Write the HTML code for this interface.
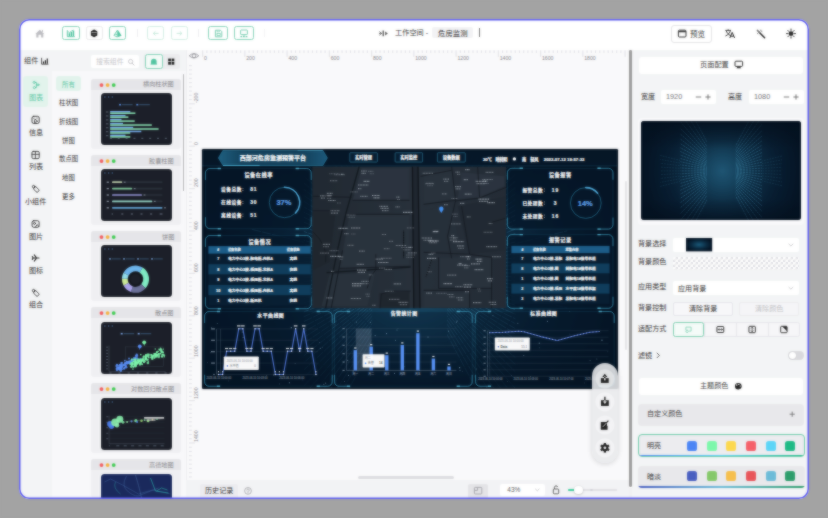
<!DOCTYPE html><html lang="zh"><head><meta charset="utf-8"><title>工作空间 - 危房监测</title><style>
html,body{margin:0;padding:0;}
body{width:828px;height:518px;overflow:hidden;background:#a3a3a3;font-family:"Liberation Sans",sans-serif;}
#win{position:absolute;left:19px;top:19px;width:790px;height:480px;border-radius:10px;background:#fff;overflow:hidden;}
#in{position:absolute;left:-19px;top:-19px;width:828px;height:518px;}
.b{position:absolute;}
.t,.s{position:absolute;overflow:visible;display:block;}
.l{position:absolute;white-space:nowrap;}
svg text{font-family:"Liberation Sans","Noto Sans CJK SC",sans-serif;}
.bw{fill:#fff;stroke:#fff;stroke-width:0.2;stroke-linejoin:round;font-weight:bold;}
#soft{position:absolute;left:0;top:0;width:828px;height:518px;pointer-events:none;-webkit-backdrop-filter:blur(0.8px);backdrop-filter:blur(0.8px);opacity:0.6;}
</style></head><body><div id="win"><div id="in"><div class="b" style="left:20px;top:50px;width:166px;height:448.5px;background:#f3f4f6;"></div><div class="b" style="left:52px;top:71px;width:134px;height:427.5px;background:#f8f8fa;"></div><div class="b" style="left:186px;top:50px;width:442.5px;height:430px;background:#f9f9fb;"></div><div class="b" style="left:186px;top:480px;width:442.5px;height:18.5px;background:#f2f3f5;"></div><div class="b" style="left:628.5px;top:50.2px;width:3.8px;height:437.3px;background:#9b9b9b;border-radius:1.5px 1.5px 2px 2px;"></div><div class="b" style="left:628.5px;top:487.5px;width:3.8px;height:11px;background:#f0f0f2;"></div><div class="b" style="left:632.3px;top:50px;width:175.7px;height:448.5px;background:#f3f4f6;"></div><svg class="s" style="left:35px;top:29px;width:10px;height:9px;" viewBox="35 29 10 9"><path d="M35.4 33.9 L39.8 29.7 L44.2 33.9 L43.3 33.9 V37.6 H41.1 V34.8 H38.5 V37.6 H36.3 V33.9 Z" fill="#bcbcc0"/><path d="M42.4 29.9 v2.2" stroke="#bcbcc0" stroke-width="1"/></svg><div class="b" style="left:62.2px;top:26.2px;width:17.4px;height:14.3px;background:#fff;border-radius:2.5px;border:1px solid #86d3b8;box-sizing:border-box;"></div><svg class="s" style="left:66px;top:29px;width:10px;height:9px;" viewBox="66 29 10 9"><path d="M67.3 30.2 V36.6 H74.8" fill="none" stroke="#52c4a0" stroke-width="0.9"/><path d="M68.6 36 V33.2 H70 V36Z M70.6 36 V32 H72 V36Z M72.6 36 V30.6 H74.2 V36Z" fill="#52c4a0"/><path d="M68 31.6 L69.4 32.6 L71.4 31.2 L73.4 30" fill="none" stroke="#52c4a0" stroke-width="0.7"/></svg><div class="b" style="left:85.5px;top:26.2px;width:17.1px;height:14.3px;background:#fff;border-radius:2.5px;border:1px solid #e9e9eb;box-sizing:border-box;"></div><svg class="s" style="left:90px;top:29px;width:9px;height:9px;" viewBox="90 29 9 9"><path d="M94.1 29.6 L97.3 31.2 V35.6 L94.1 37.2 L90.9 35.6 V31.2 Z" fill="#1f1f1f"/><path d="M91.6 32.6 H96.6" stroke="#fff" stroke-width="0.6"/><path d="M92.6 34.4 H95.6" stroke="#999" stroke-width="0.5"/></svg><div class="b" style="left:108.8px;top:26.2px;width:17.6px;height:14.3px;background:#fff;border-radius:2.5px;border:1px solid #86d3b8;box-sizing:border-box;"></div><svg class="s" style="left:113px;top:29px;width:10px;height:9px;" viewBox="113 29 10 9"><path d="M117.8 29.8 L121.6 35.8 L117.6 37.2 Z" fill="#52c4a0"/><path d="M117.4 30.2 L113.9 35.4 L117.2 37 Z" fill="none" stroke="#52c4a0" stroke-width="0.8" stroke-linejoin="round"/><circle cx="116" cy="34.4" r="0.7" fill="#52c4a0"/></svg><div class="b" style="left:137px;top:29px;width:0.8px;height:8px;background:#eeeef0;"></div><div class="b" style="left:198px;top:29px;width:0.8px;height:8px;background:#eeeef0;"></div><div class="b" style="left:263.6px;top:29px;width:0.8px;height:8px;background:#f2f2f4;"></div><div class="b" style="left:147.2px;top:26.2px;width:17.3px;height:14.3px;background:#fff;border-radius:2.5px;border:1px solid #d3eee3;box-sizing:border-box;"></div><svg class="s" style="left:152px;top:30px;width:8px;height:7px;" viewBox="152 30 8 7"><path d="M158.6 33.4 H153.4 M155.4 31.4 L153.3 33.4 L155.4 35.4" fill="none" stroke="#bfe6d7" stroke-width="0.9"/></svg><div class="b" style="left:170.6px;top:26.2px;width:17.4px;height:14.3px;background:#fff;border-radius:2.5px;border:1px solid #d3eee3;box-sizing:border-box;"></div><svg class="s" style="left:175px;top:30px;width:9px;height:7px;" viewBox="175 30 9 7"><path d="M176.6 33.4 H181.8 M179.8 31.4 L181.9 33.4 L179.8 35.4" fill="none" stroke="#bfe6d7" stroke-width="0.9"/></svg><div class="b" style="left:208.4px;top:26.2px;width:20px;height:14.3px;background:#fff;border-radius:2.5px;border:1px solid #86d3b8;box-sizing:border-box;"></div><svg class="s" style="left:214px;top:29px;width:9px;height:9px;" viewBox="214 29 9 9"><path d="M215.4 30.2 H220.4 L221.8 31.6 V36.8 H215.4 Z" fill="none" stroke="#6fcbac" stroke-width="0.9"/><rect x="217" y="33.4" width="3.2" height="2.2" fill="none" stroke="#6fcbac" stroke-width="0.7"/><path d="M217 30.4v1.4h2.4v-1.4" fill="none" stroke="#6fcbac" stroke-width="0.6"/></svg><div class="b" style="left:234px;top:26.2px;width:20px;height:14.3px;background:#fff;border-radius:2.5px;border:1px solid #86d3b8;box-sizing:border-box;"></div><svg class="s" style="left:239px;top:29px;width:10px;height:9px;" viewBox="239 29 10 9"><rect x="240.6" y="30" width="6.8" height="4.6" rx="0.6" fill="none" stroke="#6fcbac" stroke-width="0.9"/><path d="M240.4 36.6 H247.6" stroke="#6fcbac" stroke-width="1.2" stroke-dasharray="1.8 0.8"/><path d="M244 34.6 V36" stroke="#6fcbac" stroke-width="0.8"/></svg><svg class="s" style="left:378px;top:29px;width:12px;height:9px;" viewBox="378 29 12 9"><path d="M379.4 31.6 L381.6 33.4 L379.4 35.2 M381.6 33.4 H379" fill="none" stroke="#555" stroke-width="0.8"/><path d="M383.2 30.6 V36.2" stroke="#444" stroke-width="1.2"/><path d="M385.2 31.4 L387.8 33.4 L385.2 35.4 Z" fill="#555"/></svg><svg class="t" style="left:394.4px;top:28.02px;width:35.1px;height:9.36px;fill:#3a3a3a;" role="img" aria-label="工作空间 -"><title>工作空间 -</title><text x="1" y="7.42" font-size="7.2">工作空间 -</text></svg><div class="b" style="left:431.6px;top:27.4px;width:41.4px;height:10.4px;background:#f2f2f4;border-radius:2px;"></div><svg class="t" style="left:436.5px;top:27.79px;width:31.6px;height:9.62px;fill:#333;" role="img" aria-label="危房监测"><title>危房监测</title><text x="1" y="7.62" font-size="7.4">危房监测</text></svg><div class="b" style="left:479.4px;top:28.4px;width:0.9px;height:9px;background:#777;"></div><div class="b" style="left:671.2px;top:25px;width:40.8px;height:17.7px;background:#fff;border-radius:3px;border:1px solid #e4e4e7;box-sizing:border-box;"></div><svg class="s" style="left:677px;top:29px;width:11px;height:10px;" viewBox="677 29 11 10"><rect x="678.4" y="30.2" width="7.6" height="6.8" rx="1" fill="none" stroke="#333" stroke-width="1"/><path d="M678.4 31.6 H686" stroke="#333" stroke-width="1.2"/></svg><svg class="t" style="left:688.8px;top:28.83px;width:17px;height:9.75px;fill:#3c3c3c;" role="img" aria-label="预览"><title>预览</title><text x="1" y="7.72" font-size="7.5">预览</text></svg><svg class="s" style="left:724px;top:28px;width:12px;height:12px;" viewBox="724 28 12 12"><path d="M725.4 30.4 H731 M728.2 29.4 V30.4 M726.2 30.6 C726.8 33 728.6 34.8 730.8 35.6 M730.4 30.6 C729.8 33 728 35 725.4 36" fill="none" stroke="#2a2a2a" stroke-width="0.9"/><path d="M729.8 38 L732.2 32.4 L734.6 38 M730.6 36.2 H733.8" fill="none" stroke="#2a2a2a" stroke-width="1"/></svg><svg class="s" style="left:755px;top:28px;width:12px;height:12px;" viewBox="755 28 12 12"><path d="M759.4 32.4 L764.6 37.8" stroke="#2a2a2a" stroke-width="1.5" stroke-linecap="round"/><path d="M757.4 30.4 L759.6 32.6" stroke="#777" stroke-width="1.5" stroke-linecap="round"/><path d="M760.8 29.6 v1.6 M762.4 31.2 h-1.4 M757 33.6 h1.2" stroke="#555" stroke-width="0.6"/></svg><svg class="s" style="left:785px;top:27px;width:12px;height:13px;" viewBox="785 27 12 13"><circle cx="791" cy="33.6" r="2.4" fill="#2a2a2a"/><path d="M791 29 v1.4 M791 36.8 v1.4 M786.4 33.6 h1.4 M794.2 33.6 h1.4 M787.8 30.4 l1 1 M793.2 35.8 l1 1 M794.2 30.4 l-1 1 M788.8 35.8 l-1 1" stroke="#2a2a2a" stroke-width="0.9" stroke-linecap="round"/></svg><svg class="t" style="left:23.3px;top:56.32px;width:16.4px;height:9.36px;fill:#3a3a3a;" role="img" aria-label="组件"><title>组件</title><text x="1" y="7.42" font-size="7.2">组件</text></svg><svg class="s" style="left:41px;top:57px;width:8px;height:8px;" viewBox="41 57 8 8"><path d="M41.6 57.8 V64.2 H48.4" fill="none" stroke="#2b2b2b" stroke-width="0.8"/><path d="M42.9 63.8 V61.6 H44.1 V63.8Z M44.8 63.8 V60.2 H46 V63.8Z M46.7 63.8 V58.6 H47.9 V63.8Z" fill="#2b2b2b"/></svg><div class="b" style="left:91px;top:55.2px;width:48.4px;height:12.8px;background:#fff;border-radius:2px;"></div><svg class="t" style="left:95px;top:57.22px;width:29.6px;height:8.97px;fill:#c6c6ca;" role="img" aria-label="搜索组件"><title>搜索组件</title><text x="1" y="7.11" font-size="6.9">搜索组件</text></svg><svg class="s" style="left:127px;top:57.5px;width:9px;height:8.5px;" viewBox="127 57.5 9 8.5"><circle cx="130.6" cy="61" r="2.1" fill="none" stroke="#bdbdc2" stroke-width="0.8"/><path d="M132.2 62.7 L134 64.6" stroke="#bdbdc2" stroke-width="0.9" stroke-linecap="round"/></svg><div class="b" style="left:144.2px;top:53.6px;width:36.2px;height:15.8px;background:#ebecee;border-radius:2.5px;"></div><div class="b" style="left:144.6px;top:54px;width:18.4px;height:15px;background:#f4fbf8;border-radius:2.5px;border:1px solid #86d3b8;box-sizing:border-box;"></div><svg class="s" style="left:149px;top:57px;width:10px;height:9px;" viewBox="149 57 10 9"><path d="M151 64.2 V61.6 A2.8 2.8 0 0 1 156.6 61.6 V64.2 Z" fill="#52c4a0"/><rect x="150.5" y="63.5" width="6.6" height="1.1" rx="0.4" fill="#52c4a0"/></svg><svg class="s" style="left:167px;top:57px;width:9px;height:9px;" viewBox="167 57 9 9"><rect x="168.2" y="58.6" width="2.7" height="2.7" fill="#1a1a1a"/><rect x="171.6" y="58.6" width="2.7" height="2.7" fill="#1a1a1a"/><rect x="168.2" y="62" width="2.7" height="2.7" fill="#1a1a1a"/><rect x="171.6" y="62" width="2.7" height="2.7" fill="#1a1a1a"/></svg><div class="b" style="left:182.6px;top:73.8px;width:1.9px;height:117.2px;background:#b3b3b6;border-radius:1px;"></div><div class="b" style="left:23.3px;top:75.9px;width:24.6px;height:31.1px;background:#e2f3ec;border-radius:3px;"></div><svg class="s" style="left:30px;top:80px;width:11px;height:10px;" viewBox="30 80 11 10"><g transform="translate(35.6 85)" fill="none" stroke="#5cc7a4" stroke-width="0.8" stroke-linejoin="round" stroke-linecap="round"><circle cx="-1.4" cy="-2.6" r="1.1"/><circle cx="2.4" cy="-0.2" r="1"/><circle cx="-1.2" cy="2.6" r="1.1"/><path d="M-0.4 -2.6 H0.8 V2.6 H-0.2 M0.8 -0.2 H1.4" /></g></svg><svg class="t" style="left:27.5px;top:92.98px;width:16.2px;height:9.23px;fill:#5cc7a4;" role="img" aria-label="图表"><title>图表</title><text x="1" y="7.31" font-size="7.1">图表</text></svg><svg class="s" style="left:30px;top:115.1px;width:11px;height:10px;" viewBox="30 115.1 11 10"><g transform="translate(35.6 120.1)" fill="none" stroke="#333" stroke-width="0.8" stroke-linejoin="round" stroke-linecap="round"><rect x="-3.6" y="-3.7" width="7.2" height="7.2" rx="1.7" stroke-width="0.9"/><path d="M-1.2 2.4 L-0.6 -1 L1.8 1 Z M-1.8 -1.8 h0.1 M1.4 -2 h0.1"/></g></svg><svg class="t" style="left:27.5px;top:127.58px;width:16.2px;height:9.23px;fill:#333;" role="img" aria-label="信息"><title>信息</title><text x="1" y="7.31" font-size="7.1">信息</text></svg><svg class="s" style="left:30px;top:149.5px;width:11px;height:10px;" viewBox="30 149.5 11 10"><g transform="translate(35.6 154.5)" fill="none" stroke="#333" stroke-width="0.8" stroke-linejoin="round" stroke-linecap="round"><rect x="-3.6" y="-3.6" width="7.2" height="7.2" rx="1.2" stroke-width="0.9"/><path d="M-3.6 -0.6 H3.6 M-0.2 -3.6 V3.6"/></g></svg><svg class="t" style="left:27.5px;top:161.98px;width:16.2px;height:9.23px;fill:#333;" role="img" aria-label="列表"><title>列表</title><text x="1" y="7.31" font-size="7.1">列表</text></svg><svg class="s" style="left:30px;top:184.2px;width:11px;height:10px;" viewBox="30 184.2 11 10"><g transform="translate(35.6 189.2)" fill="none" stroke="#333" stroke-width="0.8" stroke-linejoin="round" stroke-linecap="round"><circle cx="-2" cy="-2.4" r="1.25"/><rect x="-1.5" y="-1.9" width="3.4" height="5.6" rx="1.3" transform="rotate(-42)"/></g></svg><svg class="t" style="left:23.95px;top:197.19px;width:23.3px;height:9.23px;fill:#333;" role="img" aria-label="小组件"><title>小组件</title><text x="1" y="7.31" font-size="7.1">小组件</text></svg><svg class="s" style="left:30px;top:218.7px;width:11px;height:10px;" viewBox="30 218.7 11 10"><g transform="translate(35.6 223.7)" fill="none" stroke="#333" stroke-width="0.8" stroke-linejoin="round" stroke-linecap="round"><rect x="-3.5" y="-3.3" width="7" height="6.6" rx="1.6" stroke-width="0.9"/><circle cx="-1.1" cy="-0.6" r="1" /><path d="M-0.2 3 L1.6 0.6 L3.3 2.6"/></g></svg><svg class="t" style="left:27.5px;top:231.58px;width:16.2px;height:9.23px;fill:#333;" role="img" aria-label="图片"><title>图片</title><text x="1" y="7.31" font-size="7.1">图片</text></svg><svg class="s" style="left:30px;top:253.2px;width:11px;height:10px;" viewBox="30 253.2 11 10"><g transform="translate(35.6 258.2)" fill="none" stroke="#333" stroke-width="0.8" stroke-linejoin="round" stroke-linecap="round"><path d="M-3.2 0 H3.4 M0.9 -0.1 L-1.3 -3.1 M0.9 0.1 L-1.3 3.1 M-2.4 0 L-3.3 -1.5 M-2.4 0 L-3.3 1.5" stroke-width="1.1"/></g></svg><svg class="t" style="left:27.5px;top:265.99px;width:16.2px;height:9.23px;fill:#333;" role="img" aria-label="图标"><title>图标</title><text x="1" y="7.31" font-size="7.1">图标</text></svg><svg class="s" style="left:30px;top:287.8px;width:11px;height:10px;" viewBox="30 287.8 11 10"><g transform="translate(35.6 292.8)" fill="none" stroke="#333" stroke-width="0.8" stroke-linejoin="round" stroke-linecap="round"><circle cx="-2" cy="-2.4" r="1.25"/><rect x="-1.5" y="-1.9" width="3.4" height="5.6" rx="1.3" transform="rotate(-42)"/></g></svg><svg class="t" style="left:27.5px;top:300.38px;width:16.2px;height:9.23px;fill:#333;" role="img" aria-label="组合"><title>组合</title><text x="1" y="7.31" font-size="7.1">组合</text></svg><div class="b" style="left:56.3px;top:76.3px;width:24.5px;height:15px;background:#e2f3ec;border-radius:3px;"></div><svg class="t" style="left:61.3px;top:79.64px;width:14.8px;height:8.32px;fill:#5cc7a4;" role="img" aria-label="所有"><title>所有</title><text x="1" y="6.59" font-size="6.4">所有</text></svg><svg class="t" style="left:58.1px;top:98.34px;width:21.2px;height:8.32px;fill:#333;" role="img" aria-label="柱状图"><title>柱状图</title><text x="1" y="6.59" font-size="6.4">柱状图</text></svg><svg class="t" style="left:58.1px;top:117.14px;width:21.2px;height:8.32px;fill:#333;" role="img" aria-label="折线图"><title>折线图</title><text x="1" y="6.59" font-size="6.4">折线图</text></svg><svg class="t" style="left:61.3px;top:135.74px;width:14.8px;height:8.32px;fill:#333;" role="img" aria-label="饼图"><title>饼图</title><text x="1" y="6.59" font-size="6.4">饼图</text></svg><svg class="t" style="left:58.1px;top:154.44px;width:21.2px;height:8.32px;fill:#333;" role="img" aria-label="散点图"><title>散点图</title><text x="1" y="6.59" font-size="6.4">散点图</text></svg><svg class="t" style="left:61.3px;top:173.14px;width:14.8px;height:8.32px;fill:#333;" role="img" aria-label="地图"><title>地图</title><text x="1" y="6.59" font-size="6.4">地图</text></svg><svg class="t" style="left:61.3px;top:191.94px;width:14.8px;height:8.32px;fill:#333;" role="img" aria-label="更多"><title>更多</title><text x="1" y="6.59" font-size="6.4">更多</text></svg><div class="b" style="left:90.9px;top:78.6px;width:90.2px;height:70px;background:#efeff2;border-radius:3px;"></div><div class="b" style="left:90.9px;top:78.6px;width:90.2px;height:11px;background:#e5e5e9;border-radius:3px 3px 0 0;"></div><svg class="s" style="left:98px;top:81.6px;width:19px;height:6.5px;" viewBox="98 81.6 19 6.5"><circle cx="101.5" cy="84.7" r="1.9" fill="#f25a5a"/><circle cx="107.6" cy="84.7" r="1.9" fill="#f6b03c"/><circle cx="113.7" cy="84.7" r="1.9" fill="#3ccb4f"/></svg><svg class="t" style="left:142.15px;top:80.4px;width:32.75px;height:8px;fill:#88888c;" role="img" aria-label="横向柱状图"><title>横向柱状图</title><text x="1" y="6.33" font-size="6.16">横向柱状图</text></svg><div class="b" style="left:99.6px;top:92px;width:73.2px;height:53.8px;background:#fff;border-radius:4.2px;"></div><div class="b" style="left:100.5px;top:92.9px;width:71.4px;height:52px;background:#1c2029;border-radius:3.5px;"></div><svg class="s" style="left:100.5px;top:92.9px;width:71.4px;height:52px;" viewBox="100.5 92.9 71.4 52"><circle cx="104.4" cy="97" r="0.75" fill="#3f5f8a"/><circle cx="108.1" cy="97" r="0.75" fill="#3f5f8a"/><circle cx="111.8" cy="97" r="0.75" fill="#3f5f8a"/><rect x="118.6" y="103.8" width="2" height="1.6" fill="#5b8fe0"/><rect x="121.6" y="104.1" width="10.5" height="1" fill="#3b5778"/><rect x="135.8" y="103.8" width="2" height="1.6" fill="#5b8fe0"/><rect x="138.8" y="104.1" width="10.5" height="1" fill="#3b5778"/><rect x="105.4" y="111.4" width="2.4" height="1" fill="#5d6675"/><rect x="109.6" y="110.9" width="20.2" height="1.5" fill="#74a8ec"/><rect x="109.6" y="112.3" width="25.3" height="1.6" fill="#86dcae"/><rect x="105.4" y="115.35" width="2.4" height="1" fill="#5d6675"/><rect x="109.6" y="114.85" width="15.4" height="1.5" fill="#74a8ec"/><rect x="109.6" y="116.25" width="18.3" height="1.6" fill="#86dcae"/><rect x="105.4" y="119.3" width="2.4" height="1" fill="#5d6675"/><rect x="109.6" y="118.8" width="11.4" height="1.5" fill="#74a8ec"/><rect x="109.6" y="120.2" width="24.6" height="1.6" fill="#86dcae"/><rect x="105.4" y="123.25" width="2.4" height="1" fill="#5d6675"/><rect x="109.6" y="122.75" width="12.9" height="1.5" fill="#74a8ec"/><rect x="109.6" y="124.15" width="41.7" height="1.6" fill="#86dcae"/><rect x="105.4" y="127.2" width="2.4" height="1" fill="#5d6675"/><rect x="109.6" y="126.7" width="23.1" height="1.5" fill="#74a8ec"/><rect x="109.6" y="128.1" width="48.5" height="1.6" fill="#86dcae"/><rect x="105.4" y="131.15" width="2.4" height="1" fill="#5d6675"/><rect x="109.6" y="130.65" width="31.2" height="1.5" fill="#74a8ec"/><rect x="109.6" y="132.05" width="20.2" height="1.6" fill="#86dcae"/><rect x="105.4" y="135.1" width="2.4" height="1" fill="#5d6675"/><rect x="109.6" y="134.6" width="15.4" height="1.5" fill="#74a8ec"/><rect x="109.6" y="136" width="20.2" height="1.6" fill="#86dcae"/><rect x="109.4" y="137.7" width="2" height="1.1" fill="#555e6e"/><rect x="117.25" y="137.7" width="2" height="1.1" fill="#555e6e"/><rect x="125.1" y="137.7" width="2" height="1.1" fill="#555e6e"/><rect x="132.95" y="137.7" width="2" height="1.1" fill="#555e6e"/><rect x="140.8" y="137.7" width="2" height="1.1" fill="#555e6e"/><rect x="148.65" y="137.7" width="2" height="1.1" fill="#555e6e"/><rect x="156.5" y="137.7" width="2" height="1.1" fill="#555e6e"/><rect x="164.35" y="137.7" width="2" height="1.1" fill="#555e6e"/></svg><div class="b" style="left:90.9px;top:154.8px;width:90.2px;height:70px;background:#efeff2;border-radius:3px;"></div><div class="b" style="left:90.9px;top:154.8px;width:90.2px;height:11px;background:#e5e5e9;border-radius:3px 3px 0 0;"></div><svg class="s" style="left:98px;top:157.8px;width:19px;height:6.5px;" viewBox="98 157.8 19 6.5"><circle cx="101.5" cy="160.9" r="1.9" fill="#f25a5a"/><circle cx="107.6" cy="160.9" r="1.9" fill="#f6b03c"/><circle cx="113.7" cy="160.9" r="1.9" fill="#3ccb4f"/></svg><svg class="t" style="left:148.3px;top:156.6px;width:26.6px;height:8px;fill:#88888c;" role="img" aria-label="胶囊柱图"><title>胶囊柱图</title><text x="1" y="6.33" font-size="6.16">胶囊柱图</text></svg><div class="b" style="left:99.6px;top:168.2px;width:73.2px;height:53.8px;background:#fff;border-radius:4.2px;"></div><div class="b" style="left:100.5px;top:169.1px;width:71.4px;height:52px;background:#1c2029;border-radius:3.5px;"></div><svg class="s" style="left:100.5px;top:169.1px;width:71.4px;height:52px;" viewBox="100.5 169.1 71.4 52"><circle cx="104.4" cy="173.2" r="0.75" fill="#3f5f8a"/><circle cx="108.1" cy="173.2" r="0.75" fill="#3f5f8a"/><circle cx="111.8" cy="173.2" r="0.75" fill="#3f5f8a"/><rect x="111.5" y="181.45" width="50.5" height="1.7" rx="0.85" fill="#2a303b"/><rect x="111.5" y="181.45" width="10.2" height="1.7" rx="0.85" fill="#b7c6a6"/><rect x="106.2" y="181.65" width="2.2" height="1.3" fill="#8a92a0"/><rect x="123.3" y="181.7" width="1.8" height="1.2" fill="#77808e"/><rect x="111.5" y="187.85" width="50.5" height="1.7" rx="0.85" fill="#2a303b"/><rect x="111.5" y="187.85" width="20.2" height="1.7" rx="0.85" fill="#80c89b"/><rect x="106.2" y="188.05" width="2.2" height="1.3" fill="#8a92a0"/><rect x="133.3" y="188.1" width="1.8" height="1.2" fill="#77808e"/><rect x="111.5" y="194.25" width="50.5" height="1.7" rx="0.85" fill="#2a303b"/><rect x="111.5" y="194.25" width="30" height="1.7" rx="0.85" fill="#9391d3"/><rect x="106.2" y="194.45" width="2.2" height="1.3" fill="#8a92a0"/><rect x="143.1" y="194.5" width="1.8" height="1.2" fill="#77808e"/><rect x="111.5" y="200.65" width="50.5" height="1.7" rx="0.85" fill="#2a303b"/><rect x="111.5" y="200.65" width="40.3" height="1.7" rx="0.85" fill="#93d2c3"/><rect x="106.2" y="200.85" width="2.2" height="1.3" fill="#8a92a0"/><rect x="153.4" y="200.9" width="1.8" height="1.2" fill="#77808e"/><rect x="111.5" y="207.05" width="50.5" height="1.7" rx="0.85" fill="#2a303b"/><rect x="111.5" y="207.05" width="50.5" height="1.7" rx="0.85" fill="#5f9fd0"/><rect x="106.2" y="207.25" width="2.2" height="1.3" fill="#8a92a0"/><rect x="163.6" y="207.3" width="1.8" height="1.2" fill="#77808e"/><rect x="111.2" y="213.5" width="1.2" height="1.2" fill="#5f6878"/><rect x="120.8" y="213.5" width="2" height="1.2" fill="#5f6878"/><rect x="130.4" y="213.5" width="2" height="1.2" fill="#5f6878"/><rect x="140" y="213.5" width="2" height="1.2" fill="#5f6878"/><rect x="149.6" y="213.5" width="2" height="1.2" fill="#5f6878"/><rect x="159.2" y="213.5" width="2.8" height="1.2" fill="#5f6878"/></svg><div class="b" style="left:90.9px;top:231px;width:90.2px;height:70px;background:#efeff2;border-radius:3px;"></div><div class="b" style="left:90.9px;top:231px;width:90.2px;height:11px;background:#e5e5e9;border-radius:3px 3px 0 0;"></div><svg class="s" style="left:98px;top:234px;width:19px;height:6.5px;" viewBox="98 234 19 6.5"><circle cx="101.5" cy="237.1" r="1.9" fill="#f25a5a"/><circle cx="107.6" cy="237.1" r="1.9" fill="#f6b03c"/><circle cx="113.7" cy="237.1" r="1.9" fill="#3ccb4f"/></svg><svg class="t" style="left:160.6px;top:232.8px;width:14.3px;height:8px;fill:#88888c;" role="img" aria-label="饼图"><title>饼图</title><text x="1" y="6.33" font-size="6.16">饼图</text></svg><div class="b" style="left:99.6px;top:244.4px;width:73.2px;height:53.8px;background:#fff;border-radius:4.2px;"></div><div class="b" style="left:100.5px;top:245.3px;width:71.4px;height:52px;background:#1c2029;border-radius:3.5px;"></div><svg class="s" style="left:100.5px;top:245.3px;width:71.4px;height:52px;" viewBox="100.5 245.3 71.4 52"><circle cx="104.4" cy="249.4" r="0.75" fill="#3f5f8a"/><circle cx="108.1" cy="249.4" r="0.75" fill="#3f5f8a"/><circle cx="111.8" cy="249.4" r="0.75" fill="#3f5f8a"/><rect x="108.6" y="258.45" width="1.8" height="1.5" fill="#6f95c8"/><rect x="111.2" y="258.7" width="9" height="1" fill="#36506f"/><rect x="122.6" y="258.45" width="1.8" height="1.5" fill="#6f95c8"/><rect x="125.2" y="258.7" width="9" height="1" fill="#36506f"/><rect x="136.6" y="258.45" width="1.8" height="1.5" fill="#6f95c8"/><rect x="139.2" y="258.7" width="9" height="1" fill="#36506f"/><rect x="150.6" y="258.45" width="1.8" height="1.5" fill="#6f95c8"/><rect x="153.2" y="258.7" width="9" height="1" fill="#36506f"/><path d="M122.99 273.02 A13.6 13.6 0 0 1 142.21 267.87 L139.13 272.79 A7.8 7.8 0 0 0 128.11 275.74 Z" fill="#6db3ea"/><path d="M142.21 267.87 A13.6 13.6 0 0 1 145.11 288.5 L140.8 284.62 A7.8 7.8 0 0 0 139.13 272.79 Z" fill="#80ecc4"/><path d="M145.11 288.5 A13.6 13.6 0 0 1 130.35 292.18 L132.33 286.73 A7.8 7.8 0 0 0 140.8 284.62 Z" fill="#6b7199"/><path d="M130.35 292.18 A13.6 13.6 0 0 1 122.99 285.78 L128.11 283.06 A7.8 7.8 0 0 0 132.33 286.73 Z" fill="#aaa3ea"/><path d="M122.99 285.78 A13.6 13.6 0 0 1 121.41 278.93 L127.2 279.13 A7.8 7.8 0 0 0 128.11 283.06 Z" fill="#cbe996"/><path d="M121.41 278.93 A13.6 13.6 0 0 1 122.99 273.02 L128.11 275.74 A7.8 7.8 0 0 0 127.2 279.13 Z" fill="#92dbe9"/><circle cx="135" cy="279.4" r="6.2" fill="none" stroke="#11141b" stroke-width="1.2"/></svg><div class="b" style="left:90.9px;top:307.2px;width:90.2px;height:70px;background:#efeff2;border-radius:3px;"></div><div class="b" style="left:90.9px;top:307.2px;width:90.2px;height:11px;background:#e5e5e9;border-radius:3px 3px 0 0;"></div><svg class="s" style="left:98px;top:310.2px;width:19px;height:6.5px;" viewBox="98 310.2 19 6.5"><circle cx="101.5" cy="313.3" r="1.9" fill="#f25a5a"/><circle cx="107.6" cy="313.3" r="1.9" fill="#f6b03c"/><circle cx="113.7" cy="313.3" r="1.9" fill="#3ccb4f"/></svg><svg class="t" style="left:154.45px;top:309px;width:20.45px;height:8px;fill:#88888c;" role="img" aria-label="散点图"><title>散点图</title><text x="1" y="6.33" font-size="6.16">散点图</text></svg><div class="b" style="left:99.6px;top:320.6px;width:73.2px;height:53.8px;background:#fff;border-radius:4.2px;"></div><div class="b" style="left:100.5px;top:321.5px;width:71.4px;height:52px;background:#1c2029;border-radius:3.5px;"></div><svg class="s" style="left:100.5px;top:321.5px;width:71.4px;height:52px;" viewBox="100.5 321.5 71.4 52"><circle cx="104.4" cy="325.6" r="0.75" fill="#3f5f8a"/><circle cx="108.1" cy="325.6" r="0.75" fill="#3f5f8a"/><circle cx="111.8" cy="325.6" r="0.75" fill="#3f5f8a"/><rect x="120.2" y="332.4" width="2" height="1.6" fill="#7fa6e8"/><rect x="123.2" y="332.7" width="10.5" height="1" fill="#3b5778"/><rect x="137.2" y="332.4" width="2" height="1.6" fill="#7fa6e8"/><rect x="140.2" y="332.7" width="10.5" height="1" fill="#3b5778"/><path d="M108.5 345.2 V371 H165.2" fill="none" stroke="#4a5262" stroke-width="0.5"/><rect x="105.6" y="346.2" width="2" height="0.9" fill="#4f5868"/><rect x="105.6" y="349.3" width="2" height="0.9" fill="#4f5868"/><rect x="105.6" y="352.4" width="2" height="0.9" fill="#4f5868"/><rect x="105.6" y="355.5" width="2" height="0.9" fill="#4f5868"/><rect x="105.6" y="358.6" width="2" height="0.9" fill="#4f5868"/><rect x="105.6" y="361.7" width="2" height="0.9" fill="#4f5868"/><rect x="105.6" y="364.8" width="2" height="0.9" fill="#4f5868"/><rect x="105.6" y="367.9" width="2" height="0.9" fill="#4f5868"/><rect x="108.8" y="372" width="2.2" height="1" fill="#4f5868"/><rect x="118" y="372" width="2.2" height="1" fill="#4f5868"/><rect x="127.2" y="372" width="2.2" height="1" fill="#4f5868"/><rect x="136.4" y="372" width="2.2" height="1" fill="#4f5868"/><rect x="145.6" y="372" width="2.2" height="1" fill="#4f5868"/><rect x="154.8" y="372" width="2.2" height="1" fill="#4f5868"/><rect x="164" y="372" width="2.2" height="1" fill="#4f5868"/><rect x="124.8" y="346.4" width="38.4" height="19.6" fill="none" stroke="#39414f" stroke-width="0.4"/><circle cx="124.14" cy="366.93" r="0.74" fill="#5b8ff7" opacity="0.85"/><circle cx="127.51" cy="362.73" r="1" fill="#5b8ff7" opacity="0.85"/><circle cx="116.41" cy="368.53" r="0.75" fill="#5b8ff7" opacity="0.85"/><circle cx="125.63" cy="362.79" r="0.83" fill="#5b8ff7" opacity="0.85"/><circle cx="131.29" cy="360.41" r="0.94" fill="#5b8ff7" opacity="0.85"/><circle cx="139.75" cy="358.01" r="0.87" fill="#5b8ff7" opacity="0.85"/><circle cx="119.93" cy="368.01" r="1.19" fill="#5b8ff7" opacity="0.85"/><circle cx="118.48" cy="365.27" r="0.92" fill="#5b8ff7" opacity="0.85"/><circle cx="128.44" cy="362.37" r="0.82" fill="#5b8ff7" opacity="0.85"/><circle cx="130.03" cy="361.22" r="1.05" fill="#5b8ff7" opacity="0.85"/><circle cx="125.31" cy="366.31" r="1.12" fill="#5b8ff7" opacity="0.85"/><circle cx="120.06" cy="364.78" r="1.23" fill="#5b8ff7" opacity="0.85"/><circle cx="131.25" cy="364.84" r="0.77" fill="#5b8ff7" opacity="0.85"/><circle cx="125.23" cy="362.65" r="0.99" fill="#5b8ff7" opacity="0.85"/><circle cx="115.86" cy="365.56" r="1.04" fill="#5b8ff7" opacity="0.85"/><circle cx="134.54" cy="360.75" r="1.06" fill="#5b8ff7" opacity="0.85"/><circle cx="126.55" cy="362.68" r="1.27" fill="#5b8ff7" opacity="0.85"/><circle cx="126.21" cy="362.46" r="1.12" fill="#5b8ff7" opacity="0.85"/><circle cx="132.46" cy="360.79" r="0.87" fill="#5b8ff7" opacity="0.85"/><circle cx="124.36" cy="363.74" r="0.98" fill="#5b8ff7" opacity="0.85"/><circle cx="120.01" cy="367.1" r="1.16" fill="#5b8ff7" opacity="0.85"/><circle cx="118.86" cy="368.94" r="1.22" fill="#5b8ff7" opacity="0.85"/><circle cx="116.33" cy="368.45" r="1.23" fill="#5b8ff7" opacity="0.85"/><circle cx="134.66" cy="357.77" r="0.95" fill="#5b8ff7" opacity="0.85"/><circle cx="126.15" cy="361.38" r="0.79" fill="#5b8ff7" opacity="0.85"/><circle cx="119.98" cy="367.89" r="0.99" fill="#5b8ff7" opacity="0.85"/><circle cx="128.95" cy="361.79" r="0.95" fill="#5b8ff7" opacity="0.85"/><circle cx="121.41" cy="362.47" r="1.11" fill="#5b8ff7" opacity="0.85"/><circle cx="126.01" cy="360.69" r="0.73" fill="#5b8ff7" opacity="0.85"/><circle cx="136.25" cy="354.3" r="1.18" fill="#5b8ff7" opacity="0.85"/><circle cx="124.18" cy="364.49" r="1.08" fill="#5b8ff7" opacity="0.85"/><circle cx="118.12" cy="368.46" r="0.8" fill="#5b8ff7" opacity="0.85"/><circle cx="123.51" cy="364.63" r="0.79" fill="#5b8ff7" opacity="0.85"/><circle cx="118.05" cy="367.79" r="1.22" fill="#5b8ff7" opacity="0.85"/><circle cx="130.05" cy="362.43" r="0.91" fill="#5b8ff7" opacity="0.85"/><circle cx="125.68" cy="366.77" r="1.3" fill="#5b8ff7" opacity="0.85"/><circle cx="125.75" cy="363.19" r="0.76" fill="#5b8ff7" opacity="0.85"/><circle cx="123.33" cy="367.96" r="0.8" fill="#5b8ff7" opacity="0.85"/><circle cx="117.91" cy="367.75" r="0.79" fill="#5b8ff7" opacity="0.85"/><circle cx="129.4" cy="362.55" r="1.29" fill="#5b8ff7" opacity="0.85"/><circle cx="134.68" cy="357.02" r="0.92" fill="#5b8ff7" opacity="0.85"/><circle cx="119.88" cy="364.5" r="1.17" fill="#5b8ff7" opacity="0.85"/><circle cx="123.62" cy="367.99" r="1.29" fill="#5b8ff7" opacity="0.85"/><circle cx="135.52" cy="355.35" r="1.14" fill="#5b8ff7" opacity="0.85"/><circle cx="119.87" cy="365.79" r="0.72" fill="#5b8ff7" opacity="0.85"/><circle cx="116.44" cy="369.74" r="1.12" fill="#5b8ff7" opacity="0.85"/><circle cx="134.38" cy="358.6" r="1.29" fill="#5b8ff7" opacity="0.85"/><circle cx="136.45" cy="358.19" r="0.84" fill="#5b8ff7" opacity="0.85"/><circle cx="120.8" cy="368.75" r="1.24" fill="#5b8ff7" opacity="0.85"/><circle cx="132.76" cy="358.95" r="1.18" fill="#5b8ff7" opacity="0.85"/><circle cx="116.46" cy="364.34" r="1.17" fill="#5b8ff7" opacity="0.85"/><circle cx="131.76" cy="359.85" r="1.17" fill="#5b8ff7" opacity="0.85"/><circle cx="124.32" cy="360.15" r="0.94" fill="#5b8ff7" opacity="0.85"/><circle cx="126.65" cy="362.93" r="0.8" fill="#5b8ff7" opacity="0.85"/><circle cx="120.31" cy="370.35" r="1.18" fill="#5b8ff7" opacity="0.85"/><circle cx="120.77" cy="362.47" r="1.09" fill="#5b8ff7" opacity="0.85"/><circle cx="123.1" cy="364.21" r="0.71" fill="#5b8ff7" opacity="0.85"/><circle cx="136.49" cy="355.27" r="1.26" fill="#5b8ff7" opacity="0.85"/><circle cx="127.1" cy="361.07" r="0.83" fill="#5b8ff7" opacity="0.85"/><circle cx="121.3" cy="366.96" r="1.05" fill="#5b8ff7" opacity="0.85"/><circle cx="121.15" cy="366.05" r="1.25" fill="#5b8ff7" opacity="0.85"/><circle cx="122.25" cy="365.07" r="1.24" fill="#5b8ff7" opacity="0.85"/><circle cx="126.48" cy="362.6" r="1.02" fill="#5b8ff7" opacity="0.85"/><circle cx="128.8" cy="362.65" r="0.81" fill="#5b8ff7" opacity="0.85"/><circle cx="116.31" cy="367.6" r="0.98" fill="#5b8ff7" opacity="0.85"/><circle cx="130.95" cy="359.44" r="1.01" fill="#5b8ff7" opacity="0.85"/><circle cx="128.34" cy="361.2" r="1.04" fill="#5b8ff7" opacity="0.85"/><circle cx="121.12" cy="368.77" r="1" fill="#5b8ff7" opacity="0.85"/><circle cx="128.52" cy="357.99" r="0.97" fill="#5b8ff7" opacity="0.85"/><circle cx="128.04" cy="361.27" r="1.12" fill="#5b8ff7" opacity="0.85"/><circle cx="124.61" cy="362.85" r="1.26" fill="#5b8ff7" opacity="0.85"/><circle cx="133.43" cy="357.3" r="0.86" fill="#5b8ff7" opacity="0.85"/><circle cx="130.46" cy="360.78" r="0.78" fill="#5b8ff7" opacity="0.85"/><circle cx="118.24" cy="367.49" r="0.84" fill="#5b8ff7" opacity="0.85"/><circle cx="116.59" cy="365.07" r="1.24" fill="#5b8ff7" opacity="0.85"/><circle cx="119.03" cy="364.26" r="0.79" fill="#5b8ff7" opacity="0.85"/><circle cx="136.25" cy="357.85" r="1.27" fill="#5b8ff7" opacity="0.85"/><circle cx="121.14" cy="364.36" r="1.2" fill="#5b8ff7" opacity="0.85"/><circle cx="118.24" cy="367.67" r="0.9" fill="#5b8ff7" opacity="0.85"/><circle cx="119.5" cy="368.97" r="0.71" fill="#5b8ff7" opacity="0.85"/><circle cx="127.98" cy="362.18" r="0.9" fill="#5b8ff7" opacity="0.85"/><circle cx="129.29" cy="361.16" r="1.29" fill="#5b8ff7" opacity="0.85"/><circle cx="133.9" cy="359.09" r="0.86" fill="#5b8ff7" opacity="0.85"/><circle cx="117.04" cy="366.82" r="0.78" fill="#5b8ff7" opacity="0.85"/><circle cx="127.17" cy="361.87" r="0.86" fill="#5b8ff7" opacity="0.85"/><circle cx="120.65" cy="365.77" r="1.12" fill="#5b8ff7" opacity="0.85"/><circle cx="119.68" cy="368.6" r="0.96" fill="#5b8ff7" opacity="0.85"/><circle cx="119.17" cy="366.87" r="1.18" fill="#5b8ff7" opacity="0.85"/><circle cx="118.12" cy="367.17" r="1.22" fill="#5b8ff7" opacity="0.85"/><circle cx="125.17" cy="365.19" r="1.26" fill="#5b8ff7" opacity="0.85"/><circle cx="140.58" cy="362.44" r="0.84" fill="#7ff8ad" opacity="0.85"/><circle cx="134.71" cy="362.99" r="0.82" fill="#7ff8ad" opacity="0.85"/><circle cx="140.3" cy="363.45" r="0.87" fill="#7ff8ad" opacity="0.85"/><circle cx="147.49" cy="359.53" r="0.71" fill="#7ff8ad" opacity="0.85"/><circle cx="140.96" cy="361.04" r="1.03" fill="#7ff8ad" opacity="0.85"/><circle cx="134.29" cy="362.24" r="0.76" fill="#7ff8ad" opacity="0.85"/><circle cx="155.93" cy="354.94" r="1.2" fill="#7ff8ad" opacity="0.85"/><circle cx="141.75" cy="358.84" r="1.29" fill="#7ff8ad" opacity="0.85"/><circle cx="142.9" cy="356.59" r="1.08" fill="#7ff8ad" opacity="0.85"/><circle cx="143.72" cy="359.45" r="0.78" fill="#7ff8ad" opacity="0.85"/><circle cx="133.21" cy="361.16" r="0.8" fill="#7ff8ad" opacity="0.85"/><circle cx="135.02" cy="358.95" r="1.1" fill="#7ff8ad" opacity="0.85"/><circle cx="140.07" cy="362.15" r="0.98" fill="#7ff8ad" opacity="0.85"/><circle cx="135.16" cy="362.38" r="1.28" fill="#7ff8ad" opacity="0.85"/><circle cx="161.26" cy="351.55" r="1.28" fill="#7ff8ad" opacity="0.85"/><circle cx="140.87" cy="360.07" r="0.93" fill="#7ff8ad" opacity="0.85"/><circle cx="145.38" cy="357.98" r="1" fill="#7ff8ad" opacity="0.85"/><circle cx="131.11" cy="364.59" r="0.94" fill="#7ff8ad" opacity="0.85"/><circle cx="133.35" cy="363.46" r="0.84" fill="#7ff8ad" opacity="0.85"/><circle cx="147.77" cy="356" r="1.09" fill="#7ff8ad" opacity="0.85"/><circle cx="154.78" cy="353.6" r="0.9" fill="#7ff8ad" opacity="0.85"/><circle cx="163.65" cy="354.73" r="1.09" fill="#7ff8ad" opacity="0.85"/><circle cx="133.69" cy="359.18" r="1.08" fill="#7ff8ad" opacity="0.85"/><circle cx="154.73" cy="353.78" r="1.01" fill="#7ff8ad" opacity="0.85"/><circle cx="148.24" cy="354.22" r="1.2" fill="#7ff8ad" opacity="0.85"/><circle cx="151.11" cy="354.61" r="1.12" fill="#7ff8ad" opacity="0.85"/><circle cx="138.99" cy="361.17" r="0.92" fill="#7ff8ad" opacity="0.85"/><circle cx="135.15" cy="360.03" r="1.08" fill="#7ff8ad" opacity="0.85"/><circle cx="150.45" cy="353.87" r="0.7" fill="#7ff8ad" opacity="0.85"/><circle cx="156.51" cy="351.53" r="1.02" fill="#7ff8ad" opacity="0.85"/><circle cx="153.89" cy="357.24" r="0.85" fill="#7ff8ad" opacity="0.85"/><circle cx="133.19" cy="366.35" r="0.82" fill="#7ff8ad" opacity="0.85"/><circle cx="156.06" cy="354.43" r="0.93" fill="#7ff8ad" opacity="0.85"/><circle cx="145.5" cy="354.52" r="1.07" fill="#7ff8ad" opacity="0.85"/><circle cx="152.17" cy="356.57" r="0.85" fill="#7ff8ad" opacity="0.85"/><circle cx="154.26" cy="357.47" r="0.71" fill="#7ff8ad" opacity="0.85"/><circle cx="132.73" cy="366.23" r="1.12" fill="#7ff8ad" opacity="0.85"/><circle cx="152.26" cy="358.16" r="0.98" fill="#7ff8ad" opacity="0.85"/><circle cx="147.79" cy="361.26" r="0.82" fill="#7ff8ad" opacity="0.85"/><circle cx="162.51" cy="351.8" r="0.98" fill="#7ff8ad" opacity="0.85"/><circle cx="158.52" cy="353.38" r="0.86" fill="#7ff8ad" opacity="0.85"/><circle cx="138.49" cy="360.67" r="1.05" fill="#7ff8ad" opacity="0.85"/><circle cx="132.6" cy="361.18" r="0.78" fill="#7ff8ad" opacity="0.85"/><circle cx="154.75" cy="353.61" r="1.12" fill="#7ff8ad" opacity="0.85"/><circle cx="139.51" cy="359.4" r="0.71" fill="#7ff8ad" opacity="0.85"/><circle cx="129.8" cy="363.78" r="0.88" fill="#7ff8ad" opacity="0.85"/><circle cx="134.92" cy="363.6" r="1.2" fill="#7ff8ad" opacity="0.85"/><circle cx="131.07" cy="359.47" r="0.77" fill="#7ff8ad" opacity="0.85"/><circle cx="160.05" cy="347.97" r="0.87" fill="#7ff8ad" opacity="0.85"/><circle cx="139.47" cy="364.26" r="1.05" fill="#7ff8ad" opacity="0.85"/><circle cx="141.68" cy="360.14" r="0.73" fill="#7ff8ad" opacity="0.85"/><circle cx="134.75" cy="360.92" r="1.26" fill="#7ff8ad" opacity="0.85"/><circle cx="138.84" cy="363.33" r="0.81" fill="#7ff8ad" opacity="0.85"/><circle cx="145.35" cy="357.98" r="1.19" fill="#7ff8ad" opacity="0.85"/><circle cx="153.63" cy="353.42" r="1.03" fill="#7ff8ad" opacity="0.85"/><circle cx="155.88" cy="356.16" r="0.97" fill="#7ff8ad" opacity="0.85"/><circle cx="154.48" cy="353.24" r="0.73" fill="#7ff8ad" opacity="0.85"/><circle cx="161.6" cy="354.36" r="0.91" fill="#7ff8ad" opacity="0.85"/><circle cx="140.3" cy="354.12" r="0.86" fill="#7ff8ad" opacity="0.85"/><circle cx="151.51" cy="358.49" r="0.94" fill="#7ff8ad" opacity="0.85"/><circle cx="136.79" cy="362.97" r="1.24" fill="#7ff8ad" opacity="0.85"/><circle cx="147.4" cy="362.44" r="1.3" fill="#7ff8ad" opacity="0.85"/><circle cx="145.9" cy="359.41" r="0.75" fill="#7ff8ad" opacity="0.85"/><circle cx="142.69" cy="360.48" r="0.86" fill="#7ff8ad" opacity="0.85"/><circle cx="150.74" cy="354.48" r="0.95" fill="#7ff8ad" opacity="0.85"/><circle cx="143.09" cy="358.41" r="0.9" fill="#7ff8ad" opacity="0.85"/><circle cx="132.45" cy="368.63" r="0.78" fill="#7ff8ad" opacity="0.85"/><circle cx="145.47" cy="354.47" r="0.83" fill="#7ff8ad" opacity="0.85"/><circle cx="139.68" cy="362.67" r="0.97" fill="#7ff8ad" opacity="0.85"/><circle cx="162.94" cy="348.62" r="0.71" fill="#7ff8ad" opacity="0.85"/><circle cx="131.39" cy="358.79" r="0.98" fill="#7ff8ad" opacity="0.85"/><circle cx="150.99" cy="356.66" r="1.26" fill="#7ff8ad" opacity="0.85"/><circle cx="159.4" cy="349.15" r="0.85" fill="#7ff8ad" opacity="0.85"/><circle cx="135.31" cy="364.6" r="1.11" fill="#7ff8ad" opacity="0.85"/><circle cx="160.82" cy="349.28" r="1.16" fill="#7ff8ad" opacity="0.85"/><circle cx="145.31" cy="358.01" r="1.17" fill="#7ff8ad" opacity="0.85"/><circle cx="139.96" cy="359.38" r="0.88" fill="#7ff8ad" opacity="0.85"/><circle cx="135.08" cy="365.29" r="1.12" fill="#7ff8ad" opacity="0.85"/><circle cx="135.91" cy="363.5" r="1.05" fill="#7ff8ad" opacity="0.85"/><circle cx="143.69" cy="361.98" r="0.71" fill="#7ff8ad" opacity="0.85"/><circle cx="137.71" cy="361.44" r="1.09" fill="#7ff8ad" opacity="0.85"/><circle cx="158.41" cy="353.34" r="0.85" fill="#7ff8ad" opacity="0.85"/><circle cx="161.45" cy="350.36" r="0.71" fill="#7ff8ad" opacity="0.85"/><circle cx="146.37" cy="355.68" r="0.85" fill="#7ff8ad" opacity="0.85"/><circle cx="153.12" cy="354.98" r="0.72" fill="#7ff8ad" opacity="0.85"/><circle cx="140.22" cy="361.24" r="0.82" fill="#7ff8ad" opacity="0.85"/><circle cx="156.41" cy="351.53" r="0.82" fill="#7ff8ad" opacity="0.85"/><circle cx="161.2" cy="355.83" r="0.84" fill="#7ff8ad" opacity="0.85"/><circle cx="138.15" cy="359.21" r="1.27" fill="#7ff8ad" opacity="0.85"/><circle cx="147.19" cy="359.2" r="0.95" fill="#7ff8ad" opacity="0.85"/><circle cx="152.93" cy="355.32" r="0.94" fill="#7ff8ad" opacity="0.85"/><circle cx="138.47" cy="360.95" r="0.73" fill="#7ff8ad" opacity="0.85"/><circle cx="130.91" cy="365.9" r="1.23" fill="#7ff8ad" opacity="0.85"/><circle cx="157.23" cy="354.83" r="0.9" fill="#7ff8ad" opacity="0.85"/><circle cx="138.76" cy="360.05" r="0.72" fill="#7ff8ad" opacity="0.85"/><circle cx="151.42" cy="357.2" r="0.9" fill="#7ff8ad" opacity="0.85"/><circle cx="137.39" cy="361.7" r="0.91" fill="#7ff8ad" opacity="0.85"/><circle cx="163.78" cy="356.22" r="0.82" fill="#7ff8ad" opacity="0.85"/><circle cx="143.38" cy="355.74" r="0.96" fill="#7ff8ad" opacity="0.85"/><circle cx="131.43" cy="363.46" r="1.25" fill="#7ff8ad" opacity="0.85"/><circle cx="135.49" cy="364.92" r="0.72" fill="#7ff8ad" opacity="0.85"/><circle cx="144.92" cy="355.3" r="0.72" fill="#7ff8ad" opacity="0.85"/><circle cx="134.61" cy="365.18" r="0.85" fill="#7ff8ad" opacity="0.85"/><circle cx="155.79" cy="353.54" r="0.86" fill="#7ff8ad" opacity="0.85"/><circle cx="160.95" cy="351.06" r="1.13" fill="#7ff8ad" opacity="0.85"/><circle cx="141.11" cy="360.09" r="1.15" fill="#7ff8ad" opacity="0.85"/><circle cx="158.41" cy="348.77" r="0.71" fill="#7ff8ad" opacity="0.85"/><circle cx="135.51" cy="361.75" r="1.27" fill="#7ff8ad" opacity="0.85"/><circle cx="143.36" cy="361.39" r="1" fill="#7ff8ad" opacity="0.85"/><circle cx="161.58" cy="356.18" r="1.14" fill="#7ff8ad" opacity="0.85"/><circle cx="157.56" cy="350.85" r="0.9" fill="#7ff8ad" opacity="0.85"/><circle cx="139.87" cy="362.8" r="0.75" fill="#7ff8ad" opacity="0.85"/><circle cx="137.33" cy="359.67" r="0.74" fill="#7ff8ad" opacity="0.85"/><circle cx="131.08" cy="362.66" r="1.29" fill="#7ff8ad" opacity="0.85"/><circle cx="160.21" cy="352.97" r="0.75" fill="#7ff8ad" opacity="0.85"/><circle cx="132.2" cy="362.58" r="0.97" fill="#7ff8ad" opacity="0.85"/><circle cx="137.05" cy="362.42" r="1.1" fill="#7ff8ad" opacity="0.85"/><circle cx="155.95" cy="352.06" r="0.77" fill="#7ff8ad" opacity="0.85"/><circle cx="157.49" cy="356.35" r="0.92" fill="#7ff8ad" opacity="0.85"/><circle cx="154.9" cy="356.42" r="0.85" fill="#7ff8ad" opacity="0.85"/><circle cx="137.08" cy="359.94" r="0.9" fill="#7ff8ad" opacity="0.85"/><circle cx="145.1" cy="358.82" r="0.84" fill="#7ff8ad" opacity="0.85"/><circle cx="154.77" cy="348.46" r="0.76" fill="#7ff8ad" opacity="0.85"/><circle cx="147.16" cy="354.18" r="1.25" fill="#7ff8ad" opacity="0.85"/><circle cx="132.13" cy="364.28" r="0.81" fill="#7ff8ad" opacity="0.85"/><circle cx="159.74" cy="349.49" r="0.92" fill="#7ff8ad" opacity="0.85"/><circle cx="157.83" cy="353.84" r="1.17" fill="#7ff8ad" opacity="0.85"/><circle cx="162.53" cy="354.18" r="1.07" fill="#7ff8ad" opacity="0.85"/><circle cx="137.52" cy="361.98" r="0.82" fill="#7ff8ad" opacity="0.85"/><circle cx="137.74" cy="358.77" r="0.82" fill="#7ff8ad" opacity="0.85"/><circle cx="130.52" cy="366.49" r="0.81" fill="#7ff8ad" opacity="0.85"/><circle cx="141.61" cy="363.71" r="1.03" fill="#7ff8ad" opacity="0.85"/><circle cx="133.99" cy="364.25" r="1.03" fill="#7ff8ad" opacity="0.85"/><circle cx="152.06" cy="356.74" r="1.12" fill="#7ff8ad" opacity="0.85"/><circle cx="143.9" cy="360.63" r="1.27" fill="#7ff8ad" opacity="0.85"/><circle cx="139.96" cy="359.11" r="0.95" fill="#7ff8ad" opacity="0.85"/><circle cx="159.8" cy="353.28" r="0.82" fill="#7ff8ad" opacity="0.85"/><circle cx="154.33" cy="355.19" r="1.24" fill="#7ff8ad" opacity="0.85"/><circle cx="145.08" cy="356.58" r="1.23" fill="#7ff8ad" opacity="0.85"/><circle cx="145.86" cy="358.49" r="1.03" fill="#7ff8ad" opacity="0.85"/><circle cx="151.94" cy="355.5" r="1.07" fill="#7ff8ad" opacity="0.85"/><circle cx="142.19" cy="359.22" r="0.87" fill="#7ff8ad" opacity="0.85"/><circle cx="148.19" cy="356.97" r="0.99" fill="#7ff8ad" opacity="0.85"/><circle cx="157.53" cy="353.74" r="0.78" fill="#7ff8ad" opacity="0.85"/><circle cx="162.54" cy="352" r="0.73" fill="#7ff8ad" opacity="0.85"/><circle cx="158.66" cy="355.67" r="1.07" fill="#7ff8ad" opacity="0.85"/><circle cx="158.51" cy="357.07" r="0.83" fill="#7ff8ad" opacity="0.85"/><circle cx="145.23" cy="355.45" r="0.81" fill="#7ff8ad" opacity="0.85"/><circle cx="136.81" cy="362.65" r="0.93" fill="#7ff8ad" opacity="0.85"/><circle cx="134.97" cy="365.76" r="1.24" fill="#7ff8ad" opacity="0.85"/><circle cx="139.3" cy="345.8" r="1.9" fill="#5b8ff7"/><path d="M138.7 347.2 h1.2 l-0.6 2.6z" fill="#5b8ff7"/><circle cx="143.7" cy="341.8" r="1.9" fill="#7ff8ad"/><path d="M143.1 343.2 h1.2 l-0.6 2.6z" fill="#7ff8ad"/></svg><div class="b" style="left:90.9px;top:383.3px;width:90.2px;height:70px;background:#efeff2;border-radius:3px;"></div><div class="b" style="left:90.9px;top:383.3px;width:90.2px;height:11px;background:#e5e5e9;border-radius:3px 3px 0 0;"></div><svg class="s" style="left:98px;top:386.3px;width:19px;height:6.5px;" viewBox="98 386.3 19 6.5"><circle cx="101.5" cy="389.4" r="1.9" fill="#f25a5a"/><circle cx="107.6" cy="389.4" r="1.9" fill="#f6b03c"/><circle cx="113.7" cy="389.4" r="1.9" fill="#3ccb4f"/></svg><svg class="t" style="left:129.85px;top:385.1px;width:45.05px;height:8px;fill:#88888c;" role="img" aria-label="对数回归散点图"><title>对数回归散点图</title><text x="1" y="6.33" font-size="6.16">对数回归散点图</text></svg><div class="b" style="left:99.6px;top:396.7px;width:73.2px;height:53.8px;background:#fff;border-radius:4.2px;"></div><div class="b" style="left:100.5px;top:397.6px;width:71.4px;height:52px;background:#1c2029;border-radius:3.5px;"></div><svg class="s" style="left:100.5px;top:397.6px;width:71.4px;height:52px;" viewBox="100.5 397.6 71.4 52"><circle cx="104.4" cy="401.7" r="0.75" fill="#3f5f8a"/><circle cx="108.1" cy="401.7" r="0.75" fill="#3f5f8a"/><circle cx="111.8" cy="401.7" r="0.75" fill="#3f5f8a"/><path d="M108.6 415.3 V443.3 H164" fill="none" stroke="#4a5262" stroke-width="0.5"/><rect x="105.8" y="415.9" width="2" height="0.9" fill="#4f5868"/><path d="M108.6 416.3 H164" stroke="#2a313d" stroke-width="0.4"/><rect x="105.8" y="421.4" width="2" height="0.9" fill="#4f5868"/><path d="M108.6 421.8 H164" stroke="#2a313d" stroke-width="0.4"/><rect x="105.8" y="426.9" width="2" height="0.9" fill="#4f5868"/><path d="M108.6 427.3 H164" stroke="#2a313d" stroke-width="0.4"/><rect x="105.8" y="432.4" width="2" height="0.9" fill="#4f5868"/><path d="M108.6 432.8 H164" stroke="#2a313d" stroke-width="0.4"/><rect x="105.8" y="437.9" width="2" height="0.9" fill="#4f5868"/><path d="M108.6 438.3 H164" stroke="#2a313d" stroke-width="0.4"/><rect x="108.4" y="444.9" width="1" height="1" fill="#4f5868"/><rect x="115.8" y="444.9" width="3" height="1" fill="#4f5868"/><rect x="123.2" y="444.9" width="3" height="1" fill="#4f5868"/><rect x="130.6" y="444.9" width="3" height="1" fill="#4f5868"/><rect x="138" y="444.9" width="3" height="1" fill="#4f5868"/><rect x="145.4" y="444.9" width="3" height="1" fill="#4f5868"/><rect x="152.8" y="444.9" width="3" height="1" fill="#4f5868"/><rect x="160.2" y="444.9" width="3" height="1" fill="#4f5868"/><circle cx="109.6" cy="423.7" r="3" fill="#4c7ff2" opacity="0.92"/><circle cx="111" cy="425.9" r="2.6" fill="#4c7ff2" opacity="0.92"/><circle cx="114.6" cy="421.9" r="3.9" fill="#8af0ac" opacity="0.92"/><circle cx="119.3" cy="418.9" r="3.5" fill="#8af0ac" opacity="0.92"/><circle cx="116.5" cy="424.8" r="2.2" fill="#8ff0b0" opacity="0.92"/><circle cx="122.5" cy="421.9" r="1.4" fill="#7deaa0" opacity="0.92"/><circle cx="126.6" cy="421.5" r="1" fill="#8fe8a0" opacity="0.92"/><circle cx="131" cy="420.9" r="1.1" fill="#5f8ff0" opacity="0.92"/><circle cx="135.4" cy="420.3" r="1.6" fill="#7deaa0" opacity="0.92"/><circle cx="136.6" cy="421.7" r="1" fill="#4c7ff2" opacity="0.92"/><circle cx="141" cy="420.3" r="1.3" fill="#9fe070" opacity="0.92"/><circle cx="144.2" cy="419.7" r="0.9" fill="#7deaa0" opacity="0.92"/><circle cx="147.6" cy="420.5" r="1.4" fill="#9ff08a" opacity="0.92"/><circle cx="152" cy="419.3" r="0.9" fill="#e8d070" opacity="0.92"/><circle cx="156.5" cy="418.9" r="0.8" fill="#7deaa0" opacity="0.92"/><path d="M110 423.8 Q124 420.3 160 418.7" fill="none" stroke="#8fb8a0" stroke-width="0.4" opacity="0.7"/><rect x="143.6" y="416.7" width="20" height="1.6" fill="#f2f2f2" opacity="0.9"/><rect x="146" y="419.1" width="9" height="1.2" fill="#d8d8d8" opacity="0.8"/></svg><div class="b" style="left:90.9px;top:459.3px;width:90.2px;height:39.2px;background:#efeff2;border-radius:3px;"></div><div class="b" style="left:90.9px;top:459.3px;width:90.2px;height:11px;background:#e5e5e9;border-radius:3px 3px 0 0;"></div><svg class="s" style="left:98px;top:462.3px;width:19px;height:6.5px;" viewBox="98 462.3 19 6.5"><circle cx="101.5" cy="465.4" r="1.9" fill="#f25a5a"/><circle cx="107.6" cy="465.4" r="1.9" fill="#f6b03c"/><circle cx="113.7" cy="465.4" r="1.9" fill="#3ccb4f"/></svg><svg class="t" style="left:148.3px;top:461.1px;width:26.6px;height:8px;fill:#88888c;" role="img" aria-label="高德地图"><title>高德地图</title><text x="1" y="6.33" font-size="6.16">高德地图</text></svg><div class="b" style="left:99.6px;top:472.7px;width:73.2px;height:26.7px;background:#fff;border-radius:4.2px;"></div><div class="b" style="left:100.5px;top:473.6px;width:71.4px;height:24.9px;background:#1b2a5c;border-radius:3.5px 3.5px 0 0;"></div><svg class="s" style="left:100.5px;top:473.6px;width:71.4px;height:24.9px;" viewBox="100.5 473.6 71.4 24.9"><path d="M104 481.6 L110 478.6 L122 484.6 L138 493.6 L152 489.6 L170 493.6" fill="none" stroke="#3a5f9a" stroke-width="0.5"/><path d="M126 475.6 Q120 485.6 128 491.6 T140 494.6 L158 487.6" fill="none" stroke="#41659f" stroke-width="0.5"/><path d="M135 474.6 C137 481.6 139 487.6 141 497.6" fill="none" stroke="#4a6fa8" stroke-width="0.5"/><path d="M150 477.6 L155 490.6 L168 492.6" fill="none" stroke="#2aa7a7" stroke-width="0.7"/><path d="M115 481.6 Q112 487.6 120 493.6" fill="none" stroke="#2a8f9f" stroke-width="0.5"/><path d="M156 490.6 l5 -3 l6 2" fill="none" stroke="#2fb0a8" stroke-width="0.6"/></svg><div class="b" style="left:186px;top:50px;width:1px;height:430px;background:#eeeef1;"></div><svg class="s" style="left:188px;top:51px;width:12px;height:10px;" viewBox="188 51 12 10"><path d="M189.2 55.8 Q194 51.4 198.8 55.8 Q194 60.2 189.2 55.8 Z" fill="none" stroke="#8c8c90" stroke-width="0.8"/><circle cx="194" cy="55.8" r="1.9" fill="none" stroke="#8c8c90" stroke-width="0.8"/></svg><svg class="s" style="left:186px;top:50px;width:442px;height:430px;" viewBox="186 50 442 430"><g stroke="#d6d6db" stroke-width="0.7" fill="none"><path d="M202.6 50.4 V56.8"/><path d="M206.82 50.4 V52.9"/><path d="M211.05 50.4 V52.9"/><path d="M215.28 50.4 V52.9"/><path d="M219.5 50.4 V52.9"/><path d="M223.72 50.4 V52.9"/><path d="M227.95 50.4 V52.9"/><path d="M232.17 50.4 V52.9"/><path d="M236.4 50.4 V52.9"/><path d="M240.62 50.4 V52.9"/><path d="M244.85 50.4 V56.8"/><path d="M249.07 50.4 V52.9"/><path d="M253.3 50.4 V52.9"/><path d="M257.52 50.4 V52.9"/><path d="M261.75 50.4 V52.9"/><path d="M265.97 50.4 V52.9"/><path d="M270.2 50.4 V52.9"/><path d="M274.42 50.4 V52.9"/><path d="M278.65 50.4 V52.9"/><path d="M282.88 50.4 V52.9"/><path d="M287.1 50.4 V56.8"/><path d="M291.32 50.4 V52.9"/><path d="M295.55 50.4 V52.9"/><path d="M299.77 50.4 V52.9"/><path d="M304 50.4 V52.9"/><path d="M308.22 50.4 V52.9"/><path d="M312.45 50.4 V52.9"/><path d="M316.67 50.4 V52.9"/><path d="M320.9 50.4 V52.9"/><path d="M325.12 50.4 V52.9"/><path d="M329.35 50.4 V56.8"/><path d="M333.57 50.4 V52.9"/><path d="M337.8 50.4 V52.9"/><path d="M342.02 50.4 V52.9"/><path d="M346.25 50.4 V52.9"/><path d="M350.48 50.4 V52.9"/><path d="M354.7 50.4 V52.9"/><path d="M358.92 50.4 V52.9"/><path d="M363.15 50.4 V52.9"/><path d="M367.38 50.4 V52.9"/><path d="M371.6 50.4 V56.8"/><path d="M375.82 50.4 V52.9"/><path d="M380.05 50.4 V52.9"/><path d="M384.27 50.4 V52.9"/><path d="M388.5 50.4 V52.9"/><path d="M392.72 50.4 V52.9"/><path d="M396.95 50.4 V52.9"/><path d="M401.17 50.4 V52.9"/><path d="M405.4 50.4 V52.9"/><path d="M409.62 50.4 V52.9"/><path d="M413.85 50.4 V56.8"/><path d="M418.07 50.4 V52.9"/><path d="M422.3 50.4 V52.9"/><path d="M426.52 50.4 V52.9"/><path d="M430.75 50.4 V52.9"/><path d="M434.97 50.4 V52.9"/><path d="M439.2 50.4 V52.9"/><path d="M443.42 50.4 V52.9"/><path d="M447.65 50.4 V52.9"/><path d="M451.88 50.4 V52.9"/><path d="M456.1 50.4 V56.8"/><path d="M460.32 50.4 V52.9"/><path d="M464.55 50.4 V52.9"/><path d="M468.77 50.4 V52.9"/><path d="M473 50.4 V52.9"/><path d="M477.23 50.4 V52.9"/><path d="M481.45 50.4 V52.9"/><path d="M485.67 50.4 V52.9"/><path d="M489.9 50.4 V52.9"/><path d="M494.12 50.4 V52.9"/><path d="M498.35 50.4 V56.8"/><path d="M502.57 50.4 V52.9"/><path d="M506.8 50.4 V52.9"/><path d="M511.02 50.4 V52.9"/><path d="M515.25 50.4 V52.9"/><path d="M519.48 50.4 V52.9"/><path d="M523.7 50.4 V52.9"/><path d="M527.92 50.4 V52.9"/><path d="M532.15 50.4 V52.9"/><path d="M536.38 50.4 V52.9"/><path d="M540.6 50.4 V56.8"/><path d="M544.82 50.4 V52.9"/><path d="M549.05 50.4 V52.9"/><path d="M553.27 50.4 V52.9"/><path d="M557.5 50.4 V52.9"/><path d="M561.72 50.4 V52.9"/><path d="M565.95 50.4 V52.9"/><path d="M570.17 50.4 V52.9"/><path d="M574.4 50.4 V52.9"/><path d="M578.62 50.4 V52.9"/><path d="M582.85 50.4 V56.8"/><path d="M587.07 50.4 V52.9"/><path d="M591.3 50.4 V52.9"/><path d="M595.52 50.4 V52.9"/><path d="M599.75 50.4 V52.9"/><path d="M603.97 50.4 V52.9"/><path d="M608.2 50.4 V52.9"/><path d="M612.42 50.4 V52.9"/><path d="M616.65 50.4 V52.9"/><path d="M620.88 50.4 V52.9"/><path d="M625.1 50.4 V56.8"/><path d="M189 65.64 H191.8"/><path d="M189 69.88 H191.8"/><path d="M189 74.12 H191.8"/><path d="M189 78.36 H191.8"/><path d="M189 82.6 H191.8"/><path d="M189 86.84 H191.8"/><path d="M189 91.08 H191.8"/><path d="M189 95.32 H191.8"/><path d="M189 99.56 H191.8"/><path d="M189 103.8 H194.8"/><path d="M189 108.04 H191.8"/><path d="M189 112.28 H191.8"/><path d="M189 116.52 H191.8"/><path d="M189 120.76 H191.8"/><path d="M189 125 H191.8"/><path d="M189 129.24 H191.8"/><path d="M189 133.48 H191.8"/><path d="M189 137.72 H191.8"/><path d="M189 141.96 H191.8"/><path d="M189 146.2 H194.8"/><path d="M189 150.44 H191.8"/><path d="M189 154.68 H191.8"/><path d="M189 158.92 H191.8"/><path d="M189 163.16 H191.8"/><path d="M189 167.4 H191.8"/><path d="M189 171.64 H191.8"/><path d="M189 175.88 H191.8"/><path d="M189 180.12 H191.8"/><path d="M189 184.36 H191.8"/><path d="M189 188.6 H194.8"/><path d="M189 192.84 H191.8"/><path d="M189 197.08 H191.8"/><path d="M189 201.32 H191.8"/><path d="M189 205.56 H191.8"/><path d="M189 209.8 H191.8"/><path d="M189 214.04 H191.8"/><path d="M189 218.28 H191.8"/><path d="M189 222.52 H191.8"/><path d="M189 226.76 H191.8"/><path d="M189 231 H194.8"/><path d="M189 235.24 H191.8"/><path d="M189 239.48 H191.8"/><path d="M189 243.72 H191.8"/><path d="M189 247.96 H191.8"/><path d="M189 252.2 H191.8"/><path d="M189 256.44 H191.8"/><path d="M189 260.68 H191.8"/><path d="M189 264.92 H191.8"/><path d="M189 269.16 H191.8"/><path d="M189 273.4 H194.8"/><path d="M189 277.64 H191.8"/><path d="M189 281.88 H191.8"/><path d="M189 286.12 H191.8"/><path d="M189 290.36 H191.8"/><path d="M189 294.6 H191.8"/><path d="M189 298.84 H191.8"/><path d="M189 303.08 H191.8"/><path d="M189 307.32 H191.8"/><path d="M189 311.56 H191.8"/><path d="M189 315.8 H194.8"/><path d="M189 320.04 H191.8"/><path d="M189 324.28 H191.8"/><path d="M189 328.52 H191.8"/><path d="M189 332.76 H191.8"/><path d="M189 337 H191.8"/><path d="M189 341.24 H191.8"/><path d="M189 345.48 H191.8"/><path d="M189 349.72 H191.8"/><path d="M189 353.96 H191.8"/><path d="M189 358.2 H194.8"/><path d="M189 362.44 H191.8"/><path d="M189 366.68 H191.8"/><path d="M189 370.92 H191.8"/><path d="M189 375.16 H191.8"/><path d="M189 379.4 H191.8"/><path d="M189 383.64 H191.8"/><path d="M189 387.88 H191.8"/><path d="M189 392.12 H191.8"/><path d="M189 396.36 H191.8"/><path d="M189 400.6 H194.8"/><path d="M189 404.84 H191.8"/><path d="M189 409.08 H191.8"/><path d="M189 413.32 H191.8"/><path d="M189 417.56 H191.8"/><path d="M189 421.8 H191.8"/><path d="M189 426.04 H191.8"/><path d="M189 430.28 H191.8"/><path d="M189 434.52 H191.8"/><path d="M189 438.76 H191.8"/><path d="M189 443 H194.8"/><path d="M189 447.24 H191.8"/><path d="M189 451.48 H191.8"/><path d="M189 455.72 H191.8"/><path d="M189 459.96 H191.8"/><path d="M189 464.2 H191.8"/><path d="M189 468.44 H191.8"/><path d="M189 472.68 H191.8"/><path d="M189 476.92 H191.8"/></g></svg><span class="l" style="top:55.44px;font-size:5.2px;line-height:6.24px;color:#86868b;left:203.9px;">0</span><span class="l" style="top:55.44px;font-size:5.2px;line-height:6.24px;color:#86868b;left:246.15px;">200</span><span class="l" style="top:55.44px;font-size:5.2px;line-height:6.24px;color:#86868b;left:288.4px;">400</span><span class="l" style="top:55.44px;font-size:5.2px;line-height:6.24px;color:#86868b;left:330.65px;">600</span><span class="l" style="top:55.44px;font-size:5.2px;line-height:6.24px;color:#86868b;left:372.9px;">800</span><span class="l" style="top:55.44px;font-size:5.2px;line-height:6.24px;color:#86868b;left:415.15px;">1000</span><span class="l" style="top:55.44px;font-size:5.2px;line-height:6.24px;color:#86868b;left:457.4px;">1200</span><span class="l" style="top:55.44px;font-size:5.2px;line-height:6.24px;color:#86868b;left:499.65px;">1400</span><span class="l" style="top:55.44px;font-size:5.2px;line-height:6.24px;color:#86868b;left:541.9px;">1600</span><span class="l" style="top:55.44px;font-size:5.2px;line-height:6.24px;color:#86868b;left:584.15px;">1800</span><span class="l" style="left:196.3px;top:102.6px;font-size:5.2px;line-height:6px;color:#86868b;transform-origin:0 0;transform:rotate(-90deg) translateY(-50%);">-200</span><span class="l" style="left:196.3px;top:145px;font-size:5.2px;line-height:6px;color:#86868b;transform-origin:0 0;transform:rotate(-90deg) translateY(-50%);">0</span><span class="l" style="left:196.3px;top:187.4px;font-size:5.2px;line-height:6px;color:#86868b;transform-origin:0 0;transform:rotate(-90deg) translateY(-50%);">200</span><span class="l" style="left:196.3px;top:229.8px;font-size:5.2px;line-height:6px;color:#86868b;transform-origin:0 0;transform:rotate(-90deg) translateY(-50%);">400</span><span class="l" style="left:196.3px;top:272.2px;font-size:5.2px;line-height:6px;color:#86868b;transform-origin:0 0;transform:rotate(-90deg) translateY(-50%);">600</span><span class="l" style="left:196.3px;top:314.6px;font-size:5.2px;line-height:6px;color:#86868b;transform-origin:0 0;transform:rotate(-90deg) translateY(-50%);">800</span><span class="l" style="left:196.3px;top:357px;font-size:5.2px;line-height:6px;color:#86868b;transform-origin:0 0;transform:rotate(-90deg) translateY(-50%);">1000</span><span class="l" style="left:196.3px;top:399.4px;font-size:5.2px;line-height:6px;color:#86868b;transform-origin:0 0;transform:rotate(-90deg) translateY(-50%);">1200</span><span class="l" style="left:196.3px;top:441.8px;font-size:5.2px;line-height:6px;color:#86868b;transform-origin:0 0;transform:rotate(-90deg) translateY(-50%);">1400</span><div class="b" style="left:624.6px;top:180.6px;width:2.2px;height:169.4px;background:#e3e3e6;border-radius:1px;"></div><div class="b" style="left:357.7px;top:475.8px;width:96.1px;height:3.2px;background:#dddde0;border-radius:1.5px;"></div><div class="b" style="left:199.6px;top:484px;width:38.2px;height:14.5px;background:#ececef;border-radius:2px;"></div><svg class="t" style="left:203.5px;top:486.08px;width:30.4px;height:9.23px;fill:#333;" role="img" aria-label="历史记录"><title>历史记录</title><text x="1" y="7.31" font-size="7.1">历史记录</text></svg><svg class="s" style="left:243px;top:486px;width:10px;height:10px;" viewBox="243 486 10 10"><circle cx="248" cy="490.9" r="3.4" fill="none" stroke="#9a9a9e" stroke-width="0.7"/><path d="M246.9 490 a1.1 1.1 0 1 1 1.6 1 q-0.5 0.3 -0.5 0.9 M248 492.9 v0.1" fill="none" stroke="#9a9a9e" stroke-width="0.7" stroke-linecap="round"/></svg><div class="b" style="left:468px;top:484px;width:20.2px;height:14.5px;background:#e4e4e7;border-radius:2px;"></div><svg class="s" style="left:473px;top:486px;width:10px;height:10px;" viewBox="473 486 10 10"><rect x="474.4" y="487.4" width="7.4" height="6.6" rx="0.8" fill="none" stroke="#a2a2a7" stroke-width="0.9"/><path d="M474.4 490.4 H477.6 V487.4" fill="none" stroke="#a2a2a7" stroke-width="0.9"/></svg><div class="b" style="left:499.8px;top:484px;width:45px;height:11.5px;background:#fff;border-radius:2px;"></div><span class="l" style="top:486.36px;font-size:6.5px;line-height:7.8px;color:#5a5a5e;left:507.3px;">43%</span><svg class="s" style="left:533px;top:487px;width:9px;height:6px;" viewBox="533 487 9 6"><path d="M535.2 488.8 L537.3 490.8 L539.4 488.8" fill="none" stroke="#c2c2c6" stroke-width="0.8"/></svg><svg class="s" style="left:551px;top:484px;width:10px;height:12px;" viewBox="551 484 10 12"><rect x="553.3" y="489" width="5.4" height="4.8" rx="0.9" fill="none" stroke="#555" stroke-width="0.9"/><path d="M554.4 489 V487.4 a1.7 1.7 0 0 1 3.3 -0.4" fill="none" stroke="#555" stroke-width="0.9"/></svg><div class="b" style="left:567.5px;top:489.3px;width:49.5px;height:1.4px;background:#e0e0e4;border-radius:0.7px;"></div><div class="b" style="left:567.5px;top:489.1px;width:10.5px;height:1.8px;background:#3fcf9f;border-radius:0.9px;"></div><div class="b" style="left:590.2px;top:488.8px;width:2.6px;height:2.6px;background:#f6f6f8;border-radius:1.3px;border:0.6px solid #d0d0d5;box-sizing:border-box;"></div><div class="b" style="left:574.2px;top:485.6px;width:8.8px;height:8.8px;background:#fff;border-radius:4.4px;box-shadow:0 0.5px 2px rgba(0,0,0,0.28);"></div><div class="b" style="left:201.8px;top:149.1px;width:416.4px;height:240px;background:#0a1622;border-radius:1.2px;box-shadow:0 0 2px rgba(0,0,0,0.35);"></div><svg class="s" style="left:202.4px;top:149.7px;width:415.2px;height:238.8px;overflow:hidden;border-radius:1px" viewBox="202.4 149.7 415.2 238.8"><defs><radialGradient id="dbg" gradientUnits="userSpaceOnUse" cx="412.91" cy="269.1" r="207.6"><stop offset="0" stop-color="#1f5573"/><stop offset="0.18" stop-color="#174560"/><stop offset="0.4" stop-color="#0e2e45"/><stop offset="0.7" stop-color="#081d31"/><stop offset="1" stop-color="#051424"/></radialGradient><clipPath id="dbc1"><rect x="304.12" y="149.7" width="68.51" height="238.8"/><rect x="447.37" y="149.7" width="68.51" height="238.8"/></clipPath><clipPath id="dbc2"><rect x="252.22" y="149.7" width="51.9" height="238.8"/><rect x="515.88" y="149.7" width="51.9" height="238.8"/></clipPath></defs><rect x="202.4" y="149.7" width="415.2" height="238.8" fill="url(#dbg)"/><path d="M398.87 242.7 L295.95 49.14M397.9 243.25 L287.83 53.66M396.94 243.82 L279.88 58.47M396.01 244.44 L272.11 63.58M395.1 245.09 L264.54 68.98M394.22 245.77 L257.18 74.65M393.36 246.48 L250.04 80.6M392.53 247.22 L243.12 86.8M391.73 248 L236.43 93.26M390.96 248.8 L230 99.97M390.22 249.64 L223.82 106.91M389.51 250.5 L217.9 114.08M388.83 251.38 L212.25 121.46M388.18 252.29 L206.88 129.05M387.57 253.23 L201.8 136.83M387 254.18 L197.01 144.8M386.46 255.16 L192.53 152.94M385.96 256.16 L188.35 161.24M385.5 257.17 L184.48 169.69M385.07 258.2 L180.93 178.29M384.68 259.25 L177.7 187M384.33 260.31 L174.8 195.83M384.03 261.38 L172.24 204.77M383.76 262.46 L170 213.79M383.53 263.55 L168.11 222.89M383.34 264.65 L166.56 232.06M383.2 265.76 L165.35 241.27M383.1 266.87 L164.48 250.53M383.03 267.98 L163.96 259.81M383.01 269.1 L163.79 269.1M383.03 270.22 L163.96 278.39M383.1 271.33 L164.48 287.67M383.2 272.44 L165.35 296.93M383.34 273.55 L166.56 306.14M383.53 274.65 L168.11 315.31M383.76 275.74 L170 324.41M384.03 276.82 L172.24 333.43M384.33 277.89 L174.8 342.37M384.68 278.95 L177.7 351.2M385.07 280 L180.93 359.91M385.5 281.03 L184.48 368.51M385.96 282.04 L188.35 376.96M386.46 283.04 L192.53 385.26M387 284.02 L197.01 393.4M387.57 284.97 L201.8 401.37M388.18 285.91 L206.88 409.15M388.83 286.82 L212.25 416.74M389.51 287.7 L217.9 424.12M390.22 288.56 L223.82 431.29M390.96 289.4 L230 438.23M391.73 290.2 L236.43 444.94M392.53 290.98 L243.12 451.4M393.36 291.72 L250.04 457.6M394.22 292.43 L257.18 463.55M395.1 293.11 L264.54 469.22M396.01 293.76 L272.11 474.62M396.94 294.38 L279.88 479.73M397.9 294.95 L287.83 484.54M398.87 295.5 L295.95 489.06M426.94 242.7 L529.86 49.14M427.92 243.25 L537.99 53.66M428.87 243.82 L545.94 58.47M429.8 244.44 L553.7 63.58M430.71 245.09 L561.27 68.98M431.59 245.77 L568.63 74.65M432.45 246.48 L575.78 80.6M433.28 247.22 L582.7 86.8M434.08 248 L589.38 93.26M434.86 248.8 L595.82 99.97M435.6 249.64 L602 106.91M436.31 250.5 L607.92 114.08M436.99 251.38 L613.56 121.46M437.63 252.29 L618.93 129.05M438.24 253.23 L624.01 136.83M438.81 254.18 L628.8 144.8M439.35 255.16 L633.29 152.94M439.85 256.16 L637.47 161.24M440.32 257.17 L641.33 169.69M440.74 258.2 L644.88 178.29M441.13 259.25 L648.11 187M441.48 260.31 L651.01 195.83M441.79 261.38 L653.58 204.77M442.05 262.46 L655.81 213.79M442.28 263.55 L657.7 222.89M442.47 264.65 L659.26 232.06M442.61 265.76 L660.47 241.27M442.72 266.87 L661.33 250.53M442.78 267.98 L661.85 259.81M442.8 269.1 L662.03 269.1M442.78 270.22 L661.85 278.39M442.72 271.33 L661.33 287.67M442.61 272.44 L660.47 296.93M442.47 273.55 L659.26 306.14M442.28 274.65 L657.7 315.31M442.05 275.74 L655.81 324.41M441.79 276.82 L653.58 333.43M441.48 277.89 L651.01 342.37M441.13 278.95 L648.11 351.2M440.74 280 L644.88 359.91M440.32 281.03 L641.33 368.51M439.85 282.04 L637.47 376.96M439.35 283.04 L633.29 385.26M438.81 284.02 L628.8 393.4M438.24 284.97 L624.01 401.37M437.63 285.91 L618.93 409.15M436.99 286.82 L613.56 416.74M436.31 287.7 L607.92 424.12M435.6 288.56 L602 431.29M434.86 289.4 L595.82 438.23M434.08 290.2 L589.38 444.94M433.28 290.98 L582.7 451.4M432.45 291.72 L575.78 457.6M431.59 292.43 L568.63 463.55M430.71 293.11 L561.27 469.22M429.8 293.76 L553.7 474.62M428.87 294.38 L545.94 479.73M427.92 294.95 L537.99 484.54M426.94 295.5 L529.86 489.06" clip-path="url(#dbc1)" stroke="#4f9fc4" stroke-opacity="0.36" stroke-width="0.75" stroke-dasharray="9 1.2" fill="none"/><path d="M340.39 251.02 L171.19 208.83M339.42 255.48 L167.96 223.7M338.73 259.99 L165.64 238.74M338.31 264.54 L164.25 253.89M338.17 269.1 L163.79 269.1M338.31 273.66 L164.25 284.31M338.73 278.21 L165.64 299.46M339.42 282.72 L167.96 314.5M340.39 287.18 L171.19 329.37M485.42 251.02 L654.63 208.83M486.39 255.48 L657.85 223.7M487.09 259.99 L660.17 238.74M487.5 264.54 L661.56 253.89M487.64 269.1 L662.03 269.1M487.5 273.66 L661.56 284.31M487.09 278.21 L660.17 299.46M486.39 282.72 L657.85 314.5M485.42 287.18 L654.63 329.37" clip-path="url(#dbc2)" stroke="#4a9cc0" stroke-opacity="0.2" stroke-width="0.75" stroke-dasharray="9 1.2" fill="none"/><defs><linearGradient id="dbv" x1="0" y1="0" x2="0" y2="1"><stop offset="0" stop-color="#04101d" stop-opacity="0.75"/><stop offset="0.28" stop-color="#04101d" stop-opacity="0"/><stop offset="0.78" stop-color="#04101d" stop-opacity="0"/><stop offset="1" stop-color="#04101d" stop-opacity="0.6"/></linearGradient></defs><rect x="202.4" y="149.7" width="415.2" height="238.8" fill="url(#dbv)"/><rect x="202.4" y="149.7" width="415.2" height="16" fill="#071829" fill-opacity="0.88"/><path d="M202.4 165.6 H617.6" stroke="#1c5470" stroke-width="0.5" opacity="0.8"/><defs><linearGradient id="hx" x1="0" x2="1"><stop offset="0" stop-color="#1f5f80"/><stop offset="0.22" stop-color="#14425c"/><stop offset="0.78" stop-color="#14425c"/><stop offset="1" stop-color="#1c587a"/></linearGradient></defs><path d="M218.8 157.6 L223.4 150 H323.2 L327.8 157.6 L323.2 165.2 H223.4 Z" fill="url(#hx)" stroke="#2b7fa3" stroke-width="0.6"/><path d="M223.4 165.2 H260" stroke="#49b0d4" stroke-width="0.9"/><path d="M298 150.2 H323" stroke="#49b0d4" stroke-width="0.7" opacity="0.7"/><text class="bw" x="240.23" y="159.9" font-size="6.04">西部河危房监测预警平台</text><rect x="350.2" y="152.4" width="27.6" height="9.4" rx="0.8" fill="#0a2438" fill-opacity="0.7" stroke="#2b6f8c" stroke-width="0.7"/><text class="bw" x="355.4" y="158.73" font-size="4.3">实时管理</text><rect x="395.5" y="152.4" width="27.5" height="9.4" rx="0.8" fill="#0a2438" fill-opacity="0.7" stroke="#2b6f8c" stroke-width="0.7"/><text class="bw" x="400.65" y="158.73" font-size="4.3">实时监控</text><rect x="437.8" y="152.4" width="27.9" height="9.4" rx="0.8" fill="#0a2438" fill-opacity="0.7" stroke="#2b6f8c" stroke-width="0.7"/><text class="bw" x="443.15" y="158.73" font-size="4.3">设备数据</text><text class="bw" x="483.3" y="160.33" font-size="4.3">30</text><text class="bw" x="488.2" y="160.3" font-size="4.2">℃</text><text class="bw" x="496" y="160.3" font-size="4.2" letter-spacing="-0.4">晴转阴</text><circle cx="514.8" cy="158.6" r="1.7" fill="#fff"/><text class="bw" x="522.4" y="160.3" font-size="4.2">南</text><text class="bw" x="530.6" y="160.3" font-size="4.2">轻风</text><text class="bw" x="544.2" y="160.35" font-size="4.34">2023-07-12 19:57:33</text><defs><clipPath id="mapc"><rect x="312.6" y="166.2" width="194" height="141.8"/></clipPath><linearGradient id="mapg" x1="0" x2="1"><stop offset="0" stop-color="#212932"/><stop offset="0.5" stop-color="#28313b"/><stop offset="1" stop-color="#242c36"/></linearGradient></defs><g clip-path="url(#mapc)"><rect x="312.6" y="166.2" width="194" height="141.8" fill="url(#mapg)"/><path d="M362 168 L409 168 L409 200 L353 200 Z" fill="#2b343f"/><path d="M350 214 L409 214 L409 266 L340 268 Z" fill="#2a333d"/><path d="M313 212 L336 212 L330 262 L313 270 Z" fill="#20272f"/><path d="M330 274 L376 272 L368 306 L322 306 Z" fill="#29323c"/><path d="M439 257 L492 257 L492 288 L439 288 Z" fill="#29323c"/><path d="M424 170 L452 170 L456 198 L424 204 Z" fill="#29323c"/><path d="M462 172 L505 176 L505 186 L480 197 L458 199 Z" fill="#2b343f"/><path d="M458 206 L506 196 L506 250 L470 254 Z" fill="#222a33"/><path d="M424 292 L470 292 L470 307 L424 307 Z" fill="#29323c"/><path d="M380 293 L410 291 L410 308 L380 308 Z" fill="#20272f"/><path d="M424 210 L452 206 L462 250 L424 252 Z" fill="#27303a"/><path d="M359.6 166 L346.6 212 L338.2 248.5 L326 308" fill="none" stroke="#131920" stroke-width="1.3"/><path d="M343 250 L331.6 308" fill="none" stroke="#141a20" stroke-width="0.9"/><path d="M412.6 166 L414 308 L420.6 308 L418.6 166 Z" fill="#202730"/><path d="M412.8 166 L414.2 308 M418.4 166 L420.4 308" fill="none" stroke="#10151b" stroke-width="1.25"/><path d="M327 272.4 L411 266.8" fill="none" stroke="#131920" stroke-width="1.2"/><path d="M313 210.5 H338 M313 231 Q329 246 326 262 M376.2 254 V269.6 L370.6 277 L367.7 288 M380.4 308 L381.8 293.6 L394.5 290.8 L411 290.8 M404 230 V258 M313 196 L352 197 M455.9 200.6 L479.8 197.8 L508 186.5 M452 166 L456 200 L448 236 L452 258 M462 206 L470 254 L492 257 V308 M424 204 L456 200 M424 252 L470 254 M439 257 V288 H492 M424 290 H470 V308 M353 200 H410 M350 214 H410 M478 166 L480 197 M421 176 L452 170 M340 268 L411 266 M492 222 L506 218" fill="none" stroke="#151b22" stroke-width="0.8"/><path d="M432 259.8 L426.3 276.7 M404 232 V256" stroke="#0d1216" stroke-width="1.1" stroke-dasharray="1 1.5" fill="none"/><g stroke="#d5dde6" stroke-width="1.15" stroke-dasharray="1 0.55" fill="none"><path d="M396.22 245.22 h10.39" opacity="0.49"/><path d="M406.7 254.74 h9.34" opacity="0.34"/><path d="M406.88 257.04 h7.48" opacity="0.3"/><path d="M459.1 263.37 h3.34" opacity="0.69"/><path d="M431.69 252.79 h4.26" opacity="0.31"/><path d="M327.08 195.03 h4.94" opacity="0.31"/><path d="M394.13 283.6 h7.15" opacity="0.56"/><path d="M433.19 231.31 h5.23" opacity="0.7"/><path d="M464.48 265.32 h5.52" opacity="0.39"/><path d="M464.62 267.62 h4.42" opacity="0.35"/><path d="M451.47 223.57 h9.77" opacity="0.45"/><path d="M465.73 169.27 h4.68" opacity="0.66"/><path d="M489.14 223.17 h3.58" opacity="0.55"/><path d="M364.08 181.03 h5.66" opacity="0.69"/><path d="M337.37 202.66 h3.81" opacity="0.32"/><path d="M347.87 245.15 h6.58" opacity="0.38"/><path d="M339.65 256.62 h3.93" opacity="0.47"/><path d="M340.19 258.92 h3.15" opacity="0.42"/><path d="M487.48 278.3 h5.43" opacity="0.65"/><path d="M488.27 280.6 h4.35" opacity="0.59"/><path d="M466.97 256.36 h3.8" opacity="0.7"/><path d="M467.49 258.66 h3.04" opacity="0.63"/><path d="M452.59 213.87 h5.37" opacity="0.33"/><path d="M453.76 216.17 h4.3" opacity="0.3"/><path d="M359.37 250.85 h5.97" opacity="0.48"/><path d="M401.74 247.23 h9.93" opacity="0.37"/><path d="M403.55 249.53 h7.95" opacity="0.34"/><path d="M460.53 203.08 h4.52" opacity="0.6"/><path d="M351.2 298.23 h10.06" opacity="0.54"/><path d="M334.88 174.45 h10.7" opacity="0.4"/><path d="M361.83 281.06 h7.77" opacity="0.42"/><path d="M363.27 283.36 h6.22" opacity="0.38"/><path d="M328.7 200.22 h7.47" opacity="0.64"/><path d="M365.92 293.78 h4.63" opacity="0.31"/><path d="M366.81 296.08 h3.71" opacity="0.28"/><path d="M327.24 193.14 h5.95" opacity="0.53"/><path d="M327.96 195.44 h4.76" opacity="0.48"/><path d="M473.41 302.35 h8.26" opacity="0.58"/><path d="M341.3 173.96 h3.14" opacity="0.66"/><path d="M486.05 172.09 h8.09" opacity="0.49"/><path d="M372.73 304.91 h3.6" opacity="0.52"/><path d="M475.03 269.3 h8.63" opacity="0.62"/><path d="M378.52 262.24 h10.21" opacity="0.65"/><path d="M455.73 286.46 h7.58" opacity="0.55"/><path d="M330.72 256.03 h10.95" opacity="0.65"/><path d="M384.96 269.02 h7.65" opacity="0.48"/><path d="M331.35 271.08 h3.24" opacity="0.54"/><path d="M357.12 264.03 h6.98" opacity="0.55"/><path d="M361.63 170.74 h5.41" opacity="0.57"/><path d="M361.97 173.04 h4.33" opacity="0.51"/><path d="M476.01 258.83 h6.54" opacity="0.66"/><path d="M477.34 261.13 h5.23" opacity="0.59"/><path d="M351.54 227.72 h9.45" opacity="0.67"/><path d="M384.26 248.39 h5.53" opacity="0.35"/><path d="M463.93 284.46 h8.69" opacity="0.68"/><path d="M464.27 286.76 h6.95" opacity="0.61"/><path d="M395.91 206.57 h4.71" opacity="0.47"/><path d="M403.52 212.03 h9.71" opacity="0.69"/><path d="M329.74 173.48 h9.98" opacity="0.32"/><path d="M455.91 171.8 h4.09" opacity="0.48"/><path d="M457.57 174.1 h3.27" opacity="0.43"/><path d="M358.38 188.33 h3.38" opacity="0.55"/><path d="M427.47 258.15 h9.46" opacity="0.68"/><path d="M351.68 233.72 h4.43" opacity="0.3"/><path d="M442.29 193.52 h5.18" opacity="0.44"/><path d="M408.19 252.64 h9.05" opacity="0.46"/><path d="M476.1 181.04 h10.46" opacity="0.59"/><path d="M477 183.34 h8.37" opacity="0.53"/><path d="M426.7 292.77 h6.01" opacity="0.53"/><path d="M456.83 297.43 h6.71" opacity="0.56"/><path d="M458.27 299.73 h5.37" opacity="0.5"/><path d="M460.63 256.33 h8.74" opacity="0.39"/><path d="M489.17 301.93 h7.3" opacity="0.62"/><path d="M490.99 304.23 h5.84" opacity="0.55"/><path d="M467.22 216.53 h3.66" opacity="0.48"/><path d="M451.81 235.4 h3.23" opacity="0.62"/><path d="M453.41 237.7 h2.58" opacity="0.56"/><path d="M347.03 214.69 h9.3" opacity="0.36"/><path d="M348.06 216.99 h7.44" opacity="0.32"/><path d="M443.95 283.27 h8.51" opacity="0.68"/><path d="M483.65 180.88 h4.77" opacity="0.51"/><path d="M485.11 183.18 h3.82" opacity="0.46"/><path d="M429.04 240.19 h9.75" opacity="0.52"/><path d="M429.8 242.49 h7.8" opacity="0.47"/><path d="M465.37 291.49 h4.67" opacity="0.64"/><path d="M408.86 247.01 h4.61" opacity="0.51"/><path d="M423.12 172.97 h10.76" opacity="0.51"/><path d="M457.59 245.64 h6.93" opacity="0.58"/><path d="M458.67 247.94 h5.54" opacity="0.52"/><path d="M389.42 299.14 h10.39" opacity="0.41"/><path d="M338.95 228.09 h9.53" opacity="0.66"/><path d="M372.43 195.2 h7.94" opacity="0.67"/><path d="M373.99 197.5 h6.35" opacity="0.6"/><path d="M320.61 195.56 h4.82" opacity="0.57"/><path d="M321.32 197.86 h3.85" opacity="0.52"/><path d="M425.68 183.44 h8.85" opacity="0.35"/><path d="M360.7 196.05 h7.24" opacity="0.47"/><path d="M389.36 241.09 h4.28" opacity="0.38"/><path d="M428.97 241.12 h9.81" opacity="0.54"/><path d="M357.55 269.8 h9.48" opacity="0.66"/><path d="M358.18 272.1 h7.59" opacity="0.59"/><path d="M479.01 198.82 h10.99" opacity="0.66"/><path d="M479.49 201.12 h8.79" opacity="0.59"/><path d="M444.48 204.44 h3.78" opacity="0.63"/><path d="M455.63 186.31 h6.22" opacity="0.57"/><path d="M456.03 188.61 h4.98" opacity="0.52"/><path d="M436.7 292.96 h10.75" opacity="0.35"/><path d="M450.04 237.48 h8.49" opacity="0.38"/><path d="M450.25 239.78 h6.79" opacity="0.34"/><path d="M323.19 244.12 h7.12" opacity="0.53"/><path d="M323.56 246.42 h5.69" opacity="0.47"/><path d="M352.49 283.3 h10.92" opacity="0.67"/><path d="M352.61 285.6 h8.74" opacity="0.6"/><path d="M484.06 231.95 h9.12" opacity="0.43"/><path d="M407.29 227.61 h7.81" opacity="0.31"/><path d="M465.19 193.82 h6.63" opacity="0.6"/><path d="M350.94 191.62 h7.1" opacity="0.31"/><path d="M457.7 264.89 h9.89" opacity="0.55"/><path d="M422.13 237.68 h10.86" opacity="0.62"/><path d="M423.95 239.98 h8.69" opacity="0.56"/><path d="M447.62 274.85 h9.52" opacity="0.46"/><path d="M471.45 263.55 h9.14" opacity="0.61"/><path d="M443.78 178.78 h5.73" opacity="0.49"/><path d="M444.49 181.08 h4.59" opacity="0.44"/><path d="M429.01 253.94 h4.86" opacity="0.68"/><path d="M376.06 258.8 h7.56" opacity="0.51"/><path d="M492.58 256.42 h8.61" opacity="0.6"/><path d="M320.62 252.77 h8.91" opacity="0.4"/><path d="M325.48 195.74 h6.01" opacity="0.34"/><path d="M327.29 198.04 h4.8" opacity="0.31"/><path d="M486.82 246.33 h10.96" opacity="0.56"/><path d="M330.01 250.35 h9.07" opacity="0.32"/><path d="M344.75 233.27 h4.35" opacity="0.5"/><path d="M326.9 297.57 h6.37" opacity="0.51"/><path d="M380.94 208 h8.24" opacity="0.52"/><path d="M382.37 210.3 h6.59" opacity="0.47"/><path d="M368.7 171.1 h4.96" opacity="0.32"/><path d="M370.21 173.4 h3.97" opacity="0.29"/><path d="M385.23 291.09 h8.99" opacity="0.32"/><path d="M482.82 179.18 h10.24" opacity="0.47"/><path d="M487.88 202.3 h7.19" opacity="0.67"/><path d="M399.03 302.12 h9.53" opacity="0.54"/><path d="M400.28 304.42 h7.63" opacity="0.49"/><path d="M396.8 196.86 h3.42" opacity="0.51"/><path d="M397.69 199.16 h2.73" opacity="0.46"/><path d="M434.15 231.06 h5.1" opacity="0.53"/><path d="M453.52 241.28 h10.98" opacity="0.68"/><path d="M358.56 184.66 h10.14" opacity="0.61"/><path d="M379.82 206.07 h8.48" opacity="0.53"/><path d="M428.03 271.5 h4.52" opacity="0.4"/><path d="M477.77 288.54 h3.32" opacity="0.32"/><path d="M478.62 290.84 h2.65" opacity="0.29"/><path d="M426.31 183.12 h7.33" opacity="0.33"/><path d="M427.66 185.42 h5.87" opacity="0.3"/><path d="M382.28 234.19 h4.69" opacity="0.44"/><path d="M464.19 179.3 h3.96" opacity="0.62"/><path d="M451.9 198.15 h6.39" opacity="0.4"/><path d="M381.54 257.97 h10.91" opacity="0.43"/><path d="M447.91 294.25 h6.42" opacity="0.45"/><path d="M449.66 296.55 h5.14" opacity="0.4"/><path d="M330.42 180.47 h7.51" opacity="0.49"/><path d="M369.2 274.51 h3.61" opacity="0.39"/><path d="M330.98 210.46 h8.8" opacity="0.58"/><path d="M331.27 212.76 h7.04" opacity="0.52"/><path d="M379.57 267.79 h5.93" opacity="0.35"/></g><path d="M441.7 212.6 C440.1 210.4 439.5 209.4 439.5 208.5 A2.2 2.2 0 1 1 443.9 208.5 C443.9 209.4 443.3 210.4 441.7 212.6 Z" fill="#4593f5"/></g><rect x="205.8" y="168.2" width="105.8" height="60.2" rx="4.5" fill="#06182a" fill-opacity="0.72" stroke="#1c5470" stroke-width="0.6" stroke-opacity="0.5"/><path d="M205.8 179.7 V172.7 A4.5 4.5 0 0 1 210.3 168.2 H221.3 M296.1 168.2 H307.1 A4.5 4.5 0 0 1 311.6 172.7 V179.7 M205.8 216.9 V223.9 A4.5 4.5 0 0 0 210.3 228.4 H221.3 M296.1 228.4 H307.1 A4.5 4.5 0 0 0 311.6 223.9 V216.9" fill="none" stroke="#43a6c8" stroke-width="0.9" stroke-opacity="0.7"/><path d="M218.1 168.2 h3.2 M296.1 168.2 h3.2 M218.1 228.4 h3.2 M296.1 228.4 h3.2" fill="none" stroke="#5cc0de" stroke-width="1.4" stroke-opacity="0.75"/><text class="bw" x="244.8" y="177.08" font-size="5.2" letter-spacing="0.5">设备在线率</text><text class="bw" x="221.4" y="190.79" font-size="4.7" letter-spacing="0.55">设备总数</text><rect x="243" y="187.7" width="0.7" height="0.7" fill="#fff"/><rect x="243" y="189.9" width="0.7" height="0.7" fill="#fff"/><text class="bw" x="250.56" y="190.86" font-size="4.9" letter-spacing="1">81</text><text class="bw" x="221.4" y="203.79" font-size="4.7" letter-spacing="0.55">在线设备</text><rect x="243" y="200.7" width="0.7" height="0.7" fill="#fff"/><rect x="243" y="202.9" width="0.7" height="0.7" fill="#fff"/><text class="bw" x="250.56" y="203.86" font-size="4.9" letter-spacing="1">30</text><text class="bw" x="221.4" y="216.49" font-size="4.7" letter-spacing="0.55">离线设备</text><rect x="243" y="213.4" width="0.7" height="0.7" fill="#fff"/><rect x="243" y="215.6" width="0.7" height="0.7" fill="#fff"/><text class="bw" x="250.56" y="216.56" font-size="4.9" letter-spacing="1">51</text><circle cx="284.9" cy="202.2" r="15.2" fill="#071a2c" fill-opacity="0.5" stroke="#1f5f7c" stroke-width="0.9"/><path d="M284.9 187 A15.2 15.2 0 0 1 295.98 212.61" fill="none" stroke="#4fa8d8" stroke-width="1.6" stroke-linecap="round"/><text x="276.86" y="205.15" font-size="7.5" font-weight="bold" fill="#62a4ee" stroke="#62a4ee" stroke-width="0.2" stroke-linejoin="round">37%</text><rect x="205.8" y="235.2" width="105.8" height="73.2" rx="4.5" fill="#06182a" fill-opacity="0.72" stroke="#1c5470" stroke-width="0.6" stroke-opacity="0.5"/><path d="M205.8 246.7 V239.7 A4.5 4.5 0 0 1 210.3 235.2 H221.3 M296.1 235.2 H307.1 A4.5 4.5 0 0 1 311.6 239.7 V246.7 M205.8 296.9 V303.9 A4.5 4.5 0 0 0 210.3 308.4 H221.3 M296.1 308.4 H307.1 A4.5 4.5 0 0 0 311.6 303.9 V296.9" fill="none" stroke="#43a6c8" stroke-width="0.9" stroke-opacity="0.7"/><path d="M218.1 235.2 h3.2 M296.1 235.2 h3.2 M218.1 308.4 h3.2 M296.1 308.4 h3.2" fill="none" stroke="#5cc0de" stroke-width="1.4" stroke-opacity="0.75"/><text class="bw" x="248.85" y="243.68" font-size="5.2" letter-spacing="0.5">设备情况</text><rect x="208.8" y="245.8" width="102.4" height="7.7" fill="#1c5c88"/><text class="bw" x="217.76" y="250.97" font-size="3.2" opacity="0.95">#</text><text class="bw" x="228.3" y="250.97" font-size="3.2" opacity="0.95">设备名称</text><text class="bw" x="287.2" y="250.97" font-size="3.2" opacity="0.95">设备状态</text><rect x="208.8" y="253.5" width="102.4" height="10.38" fill="#0b2236" fill-opacity="0.75"/><text class="bw" x="217.58" y="260.13" font-size="3.8">7</text><text class="bw" x="228.3" y="260.13" font-size="3.8">电力中心3楼-配电柜-内机A</text><text class="bw" x="289.8" y="260.13" font-size="3.8">离线</text><rect x="208.8" y="263.88" width="102.4" height="10.38" fill="#11405f" fill-opacity="0.95"/><text class="bw" x="217.58" y="270.51" font-size="3.8">8</text><text class="bw" x="228.3" y="270.51" font-size="3.8">电力中心3楼-低压柜-北机A</text><text class="bw" x="289.8" y="270.51" font-size="3.8">在线</text><rect x="208.8" y="274.26" width="102.4" height="10.38" fill="#0b2236" fill-opacity="0.75"/><text class="bw" x="217.58" y="280.89" font-size="3.8">9</text><text class="bw" x="228.3" y="280.89" font-size="3.8">电力中心3楼-低压柜-北机A</text><text class="bw" x="289.8" y="280.89" font-size="3.8">离线</text><rect x="208.8" y="284.64" width="102.4" height="10.38" fill="#11405f" fill-opacity="0.95"/><text class="bw" x="216.46" y="291.27" font-size="3.8">10</text><text class="bw" x="228.3" y="291.27" font-size="3.8">电力中心3楼-低压柜-内机A</text><text class="bw" x="289.8" y="291.27" font-size="3.8">离线</text><rect x="208.8" y="295.02" width="102.4" height="10.38" fill="#0b2236" fill-opacity="0.75"/><text class="bw" x="217.58" y="301.65" font-size="3.8">1</text><text class="bw" x="228.3" y="301.65" font-size="3.8">电力中心3楼-新风机</text><text class="bw" x="289.8" y="301.65" font-size="3.8">在线</text><rect x="507.8" y="168" width="105.6" height="60.8" rx="4.5" fill="#06182a" fill-opacity="0.72" stroke="#1c5470" stroke-width="0.6" stroke-opacity="0.5"/><path d="M507.8 179.5 V172.5 A4.5 4.5 0 0 1 512.3 168 H523.3 M597.9 168 H608.9 A4.5 4.5 0 0 1 613.4 172.5 V179.5 M507.8 217.3 V224.3 A4.5 4.5 0 0 0 512.3 228.8 H523.3 M597.9 228.8 H608.9 A4.5 4.5 0 0 0 613.4 224.3 V217.3" fill="none" stroke="#43a6c8" stroke-width="0.9" stroke-opacity="0.7"/><path d="M520.1 168 h3.2 M597.9 168 h3.2 M520.1 228.8 h3.2 M597.9 228.8 h3.2" fill="none" stroke="#5cc0de" stroke-width="1.4" stroke-opacity="0.75"/><text class="bw" x="549.35" y="176.68" font-size="5.2" letter-spacing="0.5">设备报警</text><text class="bw" x="522.8" y="191.39" font-size="4.7" letter-spacing="0.55">报警总数</text><rect x="544.4" y="188.3" width="0.7" height="0.7" fill="#fff"/><rect x="544.4" y="190.5" width="0.7" height="0.7" fill="#fff"/><text class="bw" x="552.16" y="191.46" font-size="4.9" letter-spacing="1">19</text><text class="bw" x="522.8" y="204.39" font-size="4.7" letter-spacing="0.55">已处理数</text><rect x="544.4" y="201.3" width="0.7" height="0.7" fill="#fff"/><rect x="544.4" y="203.5" width="0.7" height="0.7" fill="#fff"/><text class="bw" x="554.05" y="204.46" font-size="4.9">3</text><text class="bw" x="522.8" y="217.49" font-size="4.7" letter-spacing="0.55">未处理数</text><rect x="544.4" y="214.4" width="0.7" height="0.7" fill="#fff"/><rect x="544.4" y="216.6" width="0.7" height="0.7" fill="#fff"/><text class="bw" x="552.16" y="217.56" font-size="4.9" letter-spacing="1">16</text><circle cx="586.2" cy="202.7" r="15.4" fill="#071a2c" fill-opacity="0.5" stroke="#1f5f7c" stroke-width="0.9"/><path d="M586.2 187.3 A15.4 15.4 0 0 1 598.07 192.88" fill="none" stroke="#4fa8d8" stroke-width="1.6" stroke-linecap="round"/><text x="578.16" y="205.65" font-size="7.5" font-weight="bold" fill="#62a4ee" stroke="#62a4ee" stroke-width="0.2" stroke-linejoin="round">14%</text><rect x="507.8" y="234.3" width="105.6" height="73.7" rx="4.5" fill="#06182a" fill-opacity="0.72" stroke="#1c5470" stroke-width="0.6" stroke-opacity="0.5"/><path d="M507.8 245.8 V238.8 A4.5 4.5 0 0 1 512.3 234.3 H523.3 M597.9 234.3 H608.9 A4.5 4.5 0 0 1 613.4 238.8 V245.8 M507.8 296.5 V303.5 A4.5 4.5 0 0 0 512.3 308 H523.3 M597.9 308 H608.9 A4.5 4.5 0 0 0 613.4 303.5 V296.5" fill="none" stroke="#43a6c8" stroke-width="0.9" stroke-opacity="0.7"/><path d="M520.1 234.3 h3.2 M597.9 234.3 h3.2 M520.1 308 h3.2 M597.9 308 h3.2" fill="none" stroke="#5cc0de" stroke-width="1.4" stroke-opacity="0.75"/><text class="bw" x="549.35" y="241.88" font-size="5.2" letter-spacing="0.5">报警记录</text><rect x="511.8" y="245.6" width="98.2" height="7.4" fill="#1c5c88"/><text class="bw" x="521.86" y="250.62" font-size="3.2" opacity="0.95">#</text><text class="bw" x="533.3" y="250.62" font-size="3.2" opacity="0.95">设备名称</text><text class="bw" x="566" y="250.62" font-size="3.2" opacity="0.95">报警内容</text><rect x="511.8" y="253" width="98.2" height="10.12" fill="#0b2236" fill-opacity="0.75"/><text class="bw" x="521.7" y="259.47" font-size="3.72">7</text><text class="bw" x="533.3" y="259.47" font-size="3.72">电力中心3楼-总配</text><text class="bw" x="566" y="259.47" font-size="3.72">总配电1#信号机组</text><rect x="511.8" y="263.12" width="98.2" height="10.12" fill="#11405f" fill-opacity="0.95"/><text class="bw" x="521.7" y="269.59" font-size="3.72">8</text><text class="bw" x="533.3" y="269.59" font-size="3.72">电力中心3楼-图</text><text class="bw" x="566" y="269.59" font-size="3.72">前配电1#信号机组</text><rect x="511.8" y="273.24" width="98.2" height="10.12" fill="#0b2236" fill-opacity="0.75"/><text class="bw" x="521.7" y="279.71" font-size="3.72">1</text><text class="bw" x="533.3" y="279.71" font-size="3.72">电力中心3楼-图</text><text class="bw" x="566" y="279.71" font-size="3.72">前配电1#信号机组</text><rect x="511.8" y="283.36" width="98.2" height="10.12" fill="#11405f" fill-opacity="0.95"/><text class="bw" x="521.7" y="289.83" font-size="3.72">2</text><text class="bw" x="533.3" y="289.83" font-size="3.72">电力中心3楼-低压</text><text class="bw" x="566" y="289.83" font-size="3.72">水平度1#信号机架</text><rect x="511.8" y="293.48" width="98.2" height="10.12" fill="#0b2236" fill-opacity="0.75"/><text class="bw" x="521.7" y="299.95" font-size="3.72">3</text><text class="bw" x="533.3" y="299.95" font-size="3.72">电力中心3楼-总配</text><text class="bw" x="566" y="299.95" font-size="3.72">总配电1#信号机组</text><rect x="205" y="311.2" width="127.6" height="74.8" rx="4.5" fill="#06182a" fill-opacity="0.55" stroke="#1c5470" stroke-width="0.6" stroke-opacity="0.5"/><path d="M205 322.7 V315.7 A4.5 4.5 0 0 1 209.5 311.2 H220.5 M317.1 311.2 H328.1 A4.5 4.5 0 0 1 332.6 315.7 V322.7 M205 374.5 V381.5 A4.5 4.5 0 0 0 209.5 386 H220.5 M317.1 386 H328.1 A4.5 4.5 0 0 0 332.6 381.5 V374.5" fill="none" stroke="#43a6c8" stroke-width="0.9" stroke-opacity="0.7"/><path d="M217.3 311.2 h3.2 M317.1 311.2 h3.2 M217.3 386 h3.2 M317.1 386 h3.2" fill="none" stroke="#5cc0de" stroke-width="1.4" stroke-opacity="0.75"/><text class="bw" x="257.75" y="316.26" font-size="4.9" letter-spacing="0.5">水平曲线图</text><path d="M216.9 328.6 H318.6" stroke="#3a4a5a" stroke-width="0.4" opacity="0.8"/><rect x="211.5" y="328" width="3.8" height="1.2" fill="#9fb0c0" opacity="0.7"/><path d="M216.9 340 H318.6" stroke="#3a4a5a" stroke-width="0.4" opacity="0.8"/><rect x="211.5" y="339.4" width="3.8" height="1.2" fill="#9fb0c0" opacity="0.7"/><path d="M216.9 351.4 H318.6" stroke="#3a4a5a" stroke-width="0.4" opacity="0.8"/><rect x="211.5" y="350.8" width="3.8" height="1.2" fill="#9fb0c0" opacity="0.7"/><path d="M216.9 362.8 H318.6" stroke="#3a4a5a" stroke-width="0.4" opacity="0.8"/><rect x="211.5" y="362.2" width="3.8" height="1.2" fill="#9fb0c0" opacity="0.7"/><path d="M216.9 374.2 H318.6" stroke="#3a4a5a" stroke-width="0.4" opacity="0.8"/><rect x="213.7" y="373.6" width="1.4" height="1.2" fill="#9fb0c0" opacity="0.7"/><path d="M216.9 328.6 V374.2" stroke="#55687a" stroke-width="0.5"/><path d="M220.9 328.6 V374.2" stroke="#55687a" stroke-width="0.5" opacity="0.7"/><path d="M218.9 374.2 L222.96 374.2 L227.02 351 L231.08 351 L235.14 351 L239.2 328.4 L243.26 328.4 L247.32 351 L251.38 351 L255.44 328.4 L259.5 328.4 L263.56 351 L267.62 351 L271.68 351 L275.74 374.2 L279.8 374.2 L283.86 374.2 L287.92 351 L291.98 351 L296.04 328.4 L300.1 351 L304.16 328.4 L308.22 351 L312.28 351 L316.34 374.2" fill="none" stroke="#5277d8" stroke-width="1.1" stroke-linejoin="round"/><circle cx="218.9" cy="374.2" r="0.75" fill="#e6ecff"/><circle cx="222.96" cy="374.2" r="0.75" fill="#e6ecff"/><circle cx="227.02" cy="351" r="0.75" fill="#e6ecff"/><circle cx="231.08" cy="351" r="0.75" fill="#e6ecff"/><circle cx="235.14" cy="351" r="0.75" fill="#e6ecff"/><circle cx="239.2" cy="328.4" r="0.75" fill="#e6ecff"/><circle cx="243.26" cy="328.4" r="0.75" fill="#e6ecff"/><circle cx="247.32" cy="351" r="0.75" fill="#e6ecff"/><circle cx="251.38" cy="351" r="0.75" fill="#e6ecff"/><circle cx="255.44" cy="328.4" r="0.75" fill="#e6ecff"/><circle cx="259.5" cy="328.4" r="0.75" fill="#e6ecff"/><circle cx="263.56" cy="351" r="0.75" fill="#e6ecff"/><circle cx="267.62" cy="351" r="0.75" fill="#e6ecff"/><circle cx="271.68" cy="351" r="0.75" fill="#e6ecff"/><circle cx="275.74" cy="374.2" r="0.75" fill="#e6ecff"/><circle cx="279.8" cy="374.2" r="0.75" fill="#e6ecff"/><circle cx="283.86" cy="374.2" r="0.75" fill="#e6ecff"/><circle cx="287.92" cy="351" r="0.75" fill="#e6ecff"/><circle cx="291.98" cy="351" r="0.75" fill="#e6ecff"/><circle cx="296.04" cy="328.4" r="0.75" fill="#e6ecff"/><circle cx="300.1" cy="351" r="0.75" fill="#e6ecff"/><circle cx="304.16" cy="328.4" r="0.75" fill="#e6ecff"/><circle cx="308.22" cy="351" r="0.75" fill="#e6ecff"/><circle cx="312.28" cy="351" r="0.75" fill="#e6ecff"/><circle cx="316.34" cy="374.2" r="0.75" fill="#e6ecff"/><rect x="218.3" y="370.8" width="1.2" height="1.2" fill="#fff" opacity="0.85"/><rect x="222.36" y="370.8" width="1.2" height="1.2" fill="#fff" opacity="0.85"/><rect x="225.42" y="347.6" width="3.2" height="1.2" fill="#fff" opacity="0.85"/><rect x="229.48" y="347.6" width="3.2" height="1.2" fill="#fff" opacity="0.85"/><rect x="233.54" y="347.6" width="3.2" height="1.2" fill="#fff" opacity="0.85"/><rect x="237.4" y="325" width="3.6" height="1.2" fill="#fff" opacity="0.85"/><rect x="241.46" y="325" width="3.6" height="1.2" fill="#fff" opacity="0.85"/><rect x="245.72" y="347.6" width="3.2" height="1.2" fill="#fff" opacity="0.85"/><rect x="249.78" y="347.6" width="3.2" height="1.2" fill="#fff" opacity="0.85"/><rect x="253.64" y="325" width="3.6" height="1.2" fill="#fff" opacity="0.85"/><rect x="257.7" y="325" width="3.6" height="1.2" fill="#fff" opacity="0.85"/><rect x="261.96" y="347.6" width="3.2" height="1.2" fill="#fff" opacity="0.85"/><rect x="266.02" y="347.6" width="3.2" height="1.2" fill="#fff" opacity="0.85"/><rect x="270.08" y="347.6" width="3.2" height="1.2" fill="#fff" opacity="0.85"/><rect x="275.14" y="370.8" width="1.2" height="1.2" fill="#fff" opacity="0.85"/><rect x="279.2" y="370.8" width="1.2" height="1.2" fill="#fff" opacity="0.85"/><rect x="283.26" y="370.8" width="1.2" height="1.2" fill="#fff" opacity="0.85"/><rect x="286.32" y="347.6" width="3.2" height="1.2" fill="#fff" opacity="0.85"/><rect x="290.38" y="347.6" width="3.2" height="1.2" fill="#fff" opacity="0.85"/><rect x="294.24" y="325" width="3.6" height="1.2" fill="#fff" opacity="0.85"/><rect x="298.5" y="347.6" width="3.2" height="1.2" fill="#fff" opacity="0.85"/><rect x="302.36" y="325" width="3.6" height="1.2" fill="#fff" opacity="0.85"/><rect x="306.62" y="347.6" width="3.2" height="1.2" fill="#fff" opacity="0.85"/><rect x="310.68" y="347.6" width="3.2" height="1.2" fill="#fff" opacity="0.85"/><rect x="315.74" y="370.8" width="1.2" height="1.2" fill="#fff" opacity="0.85"/><text x="206.8" y="378.43" font-size="2.7" fill="#c4ced8" opacity="0.85">2023-06-10 10:00:00</text><text x="243" y="378.43" font-size="2.7" fill="#c4ced8" opacity="0.85">2023-06-10 10:03:00</text><text x="279.6" y="378.43" font-size="2.7" fill="#c4ced8" opacity="0.85">2023-06-10 10:06:00</text><rect x="224.2" y="356.2" width="35" height="13.6" rx="0.8" fill="#fff" opacity="0.97"/><text x="226.8" y="361.24" font-size="2.84" fill="#8a9098">2023-06-10 10:00:00</text><circle cx="227.8" cy="365.6" r="0.8" fill="#5277d8"/><text x="229.8" y="366.78" font-size="3.1" fill="#6b7078">水平值</text><text x="254.71" y="366.74" font-size="3.04" fill="#6b7078">0</text><rect x="335" y="311.2" width="137.6" height="74.8" rx="4.5" fill="#06182a" fill-opacity="0.35" stroke="#1c5470" stroke-width="0.6" stroke-opacity="0.5"/><path d="M335 322.7 V315.7 A4.5 4.5 0 0 1 339.5 311.2 H350.5 M457.1 311.2 H468.1 A4.5 4.5 0 0 1 472.6 315.7 V322.7 M335 374.5 V381.5 A4.5 4.5 0 0 0 339.5 386 H350.5 M457.1 386 H468.1 A4.5 4.5 0 0 0 472.6 381.5 V374.5" fill="none" stroke="#43a6c8" stroke-width="0.9" stroke-opacity="0.7"/><path d="M347.3 311.2 h3.2 M457.1 311.2 h3.2 M347.3 386 h3.2 M457.1 386 h3.2" fill="none" stroke="#5cc0de" stroke-width="1.4" stroke-opacity="0.75"/><text class="bw" x="391.15" y="315.06" font-size="4.9" letter-spacing="0.5">告警统计图</text><path d="M346.9 328.3 H456.8" stroke="#3f5264" stroke-width="0.4" opacity="0.8"/><rect x="342.9" y="327.75" width="2.2" height="1.1" fill="#9fb0c0" opacity="0.7"/><path d="M346.9 336.66 H456.8" stroke="#3f5264" stroke-width="0.4" opacity="0.8"/><rect x="342.9" y="336.11" width="2.2" height="1.1" fill="#9fb0c0" opacity="0.7"/><path d="M346.9 345.02 H456.8" stroke="#3f5264" stroke-width="0.4" opacity="0.8"/><rect x="342.9" y="344.47" width="2.2" height="1.1" fill="#9fb0c0" opacity="0.7"/><path d="M346.9 353.38 H456.8" stroke="#3f5264" stroke-width="0.4" opacity="0.8"/><rect x="342.9" y="352.83" width="2.2" height="1.1" fill="#9fb0c0" opacity="0.7"/><path d="M346.9 361.74 H456.8" stroke="#3f5264" stroke-width="0.4" opacity="0.8"/><rect x="342.9" y="361.19" width="2.2" height="1.1" fill="#9fb0c0" opacity="0.7"/><path d="M346.9 370.1 H456.8" stroke="#3f5264" stroke-width="0.4" opacity="0.8"/><rect x="342.9" y="369.55" width="2.2" height="1.1" fill="#9fb0c0" opacity="0.7"/><path d="M346.9 328.3 V370.1 H456.8" fill="none" stroke="#5b6e80" stroke-width="0.5"/><rect x="356.2" y="328.3" width="15.7" height="41.8" fill="#c8d4e0" opacity="0.2"/><rect x="354" y="349.8" width="3.4" height="20.3" fill="#5792f6"/><rect x="354.6" y="347.1" width="2.2" height="1.2" fill="#fff" opacity="0.9"/><text x="352.8" y="374.6" font-size="2.9" fill="#d0dae4" opacity="0.85">周一</text><rect x="369.9" y="346.4" width="3.4" height="23.7" fill="#5792f6"/><rect x="370.5" y="343.7" width="2.2" height="1.2" fill="#fff" opacity="0.9"/><text x="368.7" y="374.6" font-size="2.9" fill="#d0dae4" opacity="0.85">周二</text><rect x="385.5" y="354.9" width="3.4" height="15.2" fill="#5792f6"/><rect x="386.1" y="352.2" width="2.2" height="1.2" fill="#fff" opacity="0.9"/><text x="384.3" y="374.6" font-size="2.9" fill="#d0dae4" opacity="0.85">周三</text><rect x="401" y="344.7" width="3.4" height="25.4" fill="#5792f6"/><rect x="401.6" y="342" width="2.2" height="1.2" fill="#fff" opacity="0.9"/><text x="399.8" y="374.6" font-size="2.9" fill="#d0dae4" opacity="0.85">周四</text><rect x="416.6" y="332.9" width="3.4" height="37.2" fill="#5792f6"/><rect x="417.2" y="330.2" width="2.2" height="1.2" fill="#fff" opacity="0.9"/><text x="415.4" y="374.6" font-size="2.9" fill="#d0dae4" opacity="0.85">周五</text><rect x="432.1" y="358.3" width="3.4" height="11.8" fill="#5792f6"/><rect x="432.7" y="355.6" width="2.2" height="1.2" fill="#fff" opacity="0.9"/><text x="430.9" y="374.6" font-size="2.9" fill="#d0dae4" opacity="0.85">周六</text><rect x="447.7" y="366.2" width="3.4" height="3.9" fill="#5792f6"/><rect x="448.3" y="363.5" width="2.2" height="1.2" fill="#fff" opacity="0.9"/><text x="446.5" y="374.6" font-size="2.9" fill="#d0dae4" opacity="0.85">周日</text><rect x="363" y="354" width="22" height="13.2" rx="0.8" fill="#fff" opacity="0.97"/><text x="365.2" y="358.54" font-size="3" fill="#8a9098">周二</text><circle cx="366" cy="363" r="0.85" fill="#4f8ef6"/><text x="368.2" y="364.18" font-size="3.1" fill="#555b63">告警</text><text x="379.3" y="364.14" font-size="3.14" font-weight="bold" fill="#555b63">14</text><rect x="476" y="311.2" width="138.6" height="74.8" rx="4.5" fill="#06182a" fill-opacity="0.45" stroke="#1c5470" stroke-width="0.6" stroke-opacity="0.5"/><path d="M476 322.7 V315.7 A4.5 4.5 0 0 1 480.5 311.2 H491.5 M599.1 311.2 H610.1 A4.5 4.5 0 0 1 614.6 315.7 V322.7 M476 374.5 V381.5 A4.5 4.5 0 0 0 480.5 386 H491.5 M599.1 386 H610.1 A4.5 4.5 0 0 0 614.6 381.5 V374.5" fill="none" stroke="#43a6c8" stroke-width="0.9" stroke-opacity="0.7"/><path d="M488.3 311.2 h3.2 M599.1 311.2 h3.2 M488.3 386 h3.2 M599.1 386 h3.2" fill="none" stroke="#5cc0de" stroke-width="1.4" stroke-opacity="0.75"/><text class="bw" x="530.75" y="314.96" font-size="4.9" letter-spacing="0.5">标准曲线图</text><path d="M487.9 330.4 H609" stroke="#3a4d5e" stroke-width="0.4" opacity="0.85"/><rect x="483.9" y="329.85" width="2.2" height="1.1" fill="#9fb0c0" opacity="0.65"/><path d="M487.9 336.91 H609" stroke="#3a4d5e" stroke-width="0.4" opacity="0.85"/><rect x="483.9" y="336.36" width="2.2" height="1.1" fill="#9fb0c0" opacity="0.65"/><path d="M487.9 343.43 H609" stroke="#3a4d5e" stroke-width="0.4" opacity="0.85"/><rect x="483.9" y="342.88" width="2.2" height="1.1" fill="#9fb0c0" opacity="0.65"/><path d="M487.9 349.94 H609" stroke="#3a4d5e" stroke-width="0.4" opacity="0.85"/><rect x="483.9" y="349.39" width="2.2" height="1.1" fill="#9fb0c0" opacity="0.65"/><path d="M487.9 356.46 H609" stroke="#3a4d5e" stroke-width="0.4" opacity="0.85"/><rect x="483.9" y="355.91" width="2.2" height="1.1" fill="#9fb0c0" opacity="0.65"/><path d="M487.9 362.97 H609" stroke="#3a4d5e" stroke-width="0.4" opacity="0.85"/><rect x="483.9" y="362.42" width="2.2" height="1.1" fill="#9fb0c0" opacity="0.65"/><path d="M487.9 369.49 H609" stroke="#3a4d5e" stroke-width="0.4" opacity="0.85"/><rect x="483.9" y="368.94" width="2.2" height="1.1" fill="#9fb0c0" opacity="0.65"/><path d="M487.9 376 H609" stroke="#3a4d5e" stroke-width="0.4" opacity="0.85"/><rect x="483.9" y="375.45" width="2.2" height="1.1" fill="#9fb0c0" opacity="0.65"/><path d="M487.9 330.4 V376" stroke="#5b6e80" stroke-width="0.5"/><path d="M490.1 330.4 V376" stroke="#5b6e80" stroke-width="0.4" opacity="0.6"/><path d="M489.6 332.4 L504 332 L519.2 330.9 L524.3 331.4 L541.2 336.3 L557.7 340.2 L575 335.4 L590.2 332 L600 331.2" fill="none" stroke="#4468c8" stroke-width="1.1" stroke-linejoin="round"/><path d="M489.6 332.4 L504 332 L519.2 330.9 L524.3 331.4 L541.2 336.3 L557.7 340.2 L575 335.4 L590.2 332 L600 331.2" fill="none" stroke="#e8eeff" stroke-width="0.7" stroke-dasharray="0.9 2.3" stroke-linejoin="round"/><text x="478.6" y="380.03" font-size="2.64" fill="#c4ced8" opacity="0.85">2023-06-10 10:00:00</text><text x="514" y="380.03" font-size="2.64" fill="#c4ced8" opacity="0.85">2023-06-10 10:03:00</text><text x="549.6" y="380.03" font-size="2.64" fill="#c4ced8" opacity="0.85">2023-06-10 10:07:00</text><text x="585.4" y="380.03" font-size="2.64" fill="#c4ced8" opacity="0.85">2023-06-10 10:10:00</text><rect x="495.2" y="337.1" width="35" height="13.2" rx="0.8" fill="#fff" opacity="0.97"/><text x="497.8" y="342.04" font-size="2.84" fill="#8a9098">2023-06-10 10:00:00</text><circle cx="498.8" cy="346.4" r="0.8" fill="#4468c8"/><text x="500.8" y="347.54" font-size="3.24" font-weight="bold" fill="#444a52">Data</text><text x="521.7" y="347.54" font-size="3.04" fill="#6b7078">55.1</text><circle cx="460.05" cy="367.38" r="0.59" fill="#bfe6ff" opacity="0.58"/><circle cx="507.69" cy="381.1" r="0.36" fill="#bfe6ff" opacity="0.41"/><circle cx="590.53" cy="360.32" r="0.62" fill="#bfe6ff" opacity="0.29"/><circle cx="397.4" cy="329.74" r="0.51" fill="#bfe6ff" opacity="0.45"/><circle cx="211.74" cy="327.47" r="0.43" fill="#bfe6ff" opacity="0.57"/><circle cx="518.2" cy="323.13" r="0.59" fill="#bfe6ff" opacity="0.3"/><circle cx="457.83" cy="320.63" r="0.35" fill="#bfe6ff" opacity="0.55"/><circle cx="291.69" cy="327.38" r="0.64" fill="#bfe6ff" opacity="0.56"/><circle cx="324.21" cy="384.07" r="0.51" fill="#bfe6ff" opacity="0.49"/><circle cx="289.79" cy="382.51" r="0.56" fill="#bfe6ff" opacity="0.59"/><circle cx="570.33" cy="333.71" r="0.46" fill="#bfe6ff" opacity="0.31"/><circle cx="265.73" cy="315.95" r="0.44" fill="#bfe6ff" opacity="0.46"/><circle cx="207.78" cy="362.52" r="0.45" fill="#bfe6ff" opacity="0.36"/><circle cx="539.7" cy="347.54" r="0.44" fill="#bfe6ff" opacity="0.42"/><circle cx="493.34" cy="315.33" r="0.64" fill="#bfe6ff" opacity="0.26"/><circle cx="511.72" cy="375.21" r="0.36" fill="#bfe6ff" opacity="0.53"/><circle cx="355.51" cy="354.97" r="0.35" fill="#bfe6ff" opacity="0.27"/><circle cx="280.07" cy="383.59" r="0.41" fill="#bfe6ff" opacity="0.51"/><circle cx="584.96" cy="382.6" r="0.45" fill="#bfe6ff" opacity="0.37"/><circle cx="420.06" cy="369.95" r="0.38" fill="#bfe6ff" opacity="0.51"/><circle cx="531.03" cy="376.34" r="0.36" fill="#bfe6ff" opacity="0.58"/><circle cx="243.53" cy="336.9" r="0.53" fill="#bfe6ff" opacity="0.57"/><circle cx="344.83" cy="381.24" r="0.51" fill="#bfe6ff" opacity="0.36"/><circle cx="335.4" cy="324.49" r="0.37" fill="#bfe6ff" opacity="0.3"/><circle cx="487.03" cy="386.75" r="0.4" fill="#bfe6ff" opacity="0.27"/><circle cx="608.18" cy="351.55" r="0.47" fill="#bfe6ff" opacity="0.33"/><circle cx="448.26" cy="373.8" r="0.49" fill="#bfe6ff" opacity="0.4"/><circle cx="229.08" cy="380.62" r="0.36" fill="#bfe6ff" opacity="0.42"/><circle cx="547.81" cy="320.92" r="0.57" fill="#bfe6ff" opacity="0.58"/><circle cx="463.1" cy="370.89" r="0.38" fill="#bfe6ff" opacity="0.4"/><circle cx="267.17" cy="375.2" r="0.44" fill="#bfe6ff" opacity="0.41"/><circle cx="613.31" cy="375.77" r="0.64" fill="#bfe6ff" opacity="0.41"/><circle cx="405.18" cy="366.44" r="0.49" fill="#bfe6ff" opacity="0.35"/><circle cx="370.82" cy="322.13" r="0.46" fill="#bfe6ff" opacity="0.6"/><circle cx="597.24" cy="358.65" r="0.5" fill="#bfe6ff" opacity="0.37"/><circle cx="242.7" cy="331.7" r="0.58" fill="#bfe6ff" opacity="0.55"/><circle cx="353.53" cy="370.74" r="0.58" fill="#bfe6ff" opacity="0.49"/><circle cx="476.79" cy="368.73" r="0.46" fill="#bfe6ff" opacity="0.5"/><circle cx="320.76" cy="347.91" r="0.58" fill="#bfe6ff" opacity="0.49"/><circle cx="326.06" cy="382.86" r="0.54" fill="#bfe6ff" opacity="0.45"/><circle cx="211.12" cy="352.57" r="0.43" fill="#bfe6ff" opacity="0.49"/><circle cx="394.91" cy="373.07" r="0.54" fill="#bfe6ff" opacity="0.53"/><circle cx="348.06" cy="359.95" r="0.57" fill="#bfe6ff" opacity="0.54"/><circle cx="348.94" cy="375.06" r="0.61" fill="#bfe6ff" opacity="0.49"/><circle cx="603.88" cy="383.7" r="0.51" fill="#bfe6ff" opacity="0.44"/><circle cx="274.07" cy="374.58" r="0.63" fill="#bfe6ff" opacity="0.42"/><circle cx="487.95" cy="365.7" r="0.57" fill="#bfe6ff" opacity="0.31"/><circle cx="524.17" cy="355.14" r="0.55" fill="#bfe6ff" opacity="0.4"/><circle cx="460.39" cy="369.88" r="0.54" fill="#bfe6ff" opacity="0.5"/><circle cx="217.65" cy="323.16" r="0.48" fill="#bfe6ff" opacity="0.48"/><circle cx="295.59" cy="363.13" r="0.54" fill="#bfe6ff" opacity="0.26"/><circle cx="398.43" cy="328.19" r="0.37" fill="#bfe6ff" opacity="0.3"/><circle cx="335.63" cy="324.8" r="0.41" fill="#bfe6ff" opacity="0.26"/><circle cx="395.88" cy="339.9" r="0.53" fill="#bfe6ff" opacity="0.46"/><circle cx="303.25" cy="379.64" r="0.35" fill="#bfe6ff" opacity="0.39"/><circle cx="319.82" cy="342.16" r="0.38" fill="#bfe6ff" opacity="0.54"/><circle cx="358.64" cy="313.74" r="0.53" fill="#bfe6ff" opacity="0.28"/><circle cx="428.41" cy="336.79" r="0.52" fill="#bfe6ff" opacity="0.59"/><circle cx="539.7" cy="342.85" r="0.59" fill="#bfe6ff" opacity="0.47"/><circle cx="356.84" cy="321.8" r="0.53" fill="#bfe6ff" opacity="0.45"/><circle cx="596.18" cy="384.57" r="0.53" fill="#bfe6ff" opacity="0.37"/><circle cx="570.22" cy="311.07" r="0.38" fill="#bfe6ff" opacity="0.45"/><circle cx="456.9" cy="321.69" r="0.54" fill="#bfe6ff" opacity="0.56"/><circle cx="359.45" cy="343.81" r="0.42" fill="#bfe6ff" opacity="0.35"/><circle cx="602.38" cy="339.86" r="0.64" fill="#bfe6ff" opacity="0.57"/><circle cx="449.01" cy="330.75" r="0.64" fill="#bfe6ff" opacity="0.42"/><circle cx="375.59" cy="335.26" r="0.65" fill="#bfe6ff" opacity="0.42"/><circle cx="323.02" cy="347.25" r="0.39" fill="#bfe6ff" opacity="0.47"/><circle cx="386.98" cy="333.28" r="0.58" fill="#bfe6ff" opacity="0.54"/><circle cx="211.78" cy="351.47" r="0.43" fill="#bfe6ff" opacity="0.58"/></svg><div class="b" style="left:591.5px;top:363.2px;width:26px;height:100.2px;background:rgba(232,233,236,0.88);border-radius:13px;box-shadow:0 1px 5px rgba(0,0,0,0.16);"></div><svg class="s" style="left:591.5px;top:363px;width:26px;height:101px;" viewBox="591.5 363 26 101"><circle cx="604.4" cy="378.8" r="9.6" fill="#fff" fill-opacity="0.35"/><g transform="translate(604.3 378.8) scale(1.15)"><path d="M-3.4 -0.6 H3.4 V3.6 H-3.4 Z" fill="#222"/><path d="M0 -4.4 L-2.2 -1.6 H2.2 Z M-0.7 -2 H0.7 V1.6 H-0.7Z" fill="#222"/><path d="M-0.7 -0.6 H0.7 V1.4 H-0.7Z" fill="#ddd"/></g><circle cx="604.4" cy="401.8" r="9.6" fill="#fff" fill-opacity="0.4"/><g transform="translate(604.4 401.8) scale(1.15)"><path d="M-3.4 -1.4 H3.4 V3.6 H-3.4 Z" fill="#222"/><path d="M-0.6 -4.4 H0.6 V-1 H-0.6Z" fill="#222"/><path d="M0 2 L-1.8 -0.2 H1.8 Z M-0.6 -1.4 H0.6 V0.2 H-0.6Z" fill="#e6e6e6"/></g><circle cx="604.4" cy="425" r="9.6" fill="#fff" fill-opacity="0.4"/><g transform="translate(604.2 425) scale(1.15)"><path d="M-3.4 -2.6 H2 V3.6 H-3.4 Z" fill="#222"/><path d="M-1.4 1.2 L3.2 -3.8" stroke="#222" stroke-width="1.1"/><path d="M-1.6 1.6 L1.4 -1.6" stroke="#eee" stroke-width="0.7"/><path d="M2 0.6 V3.6 H-3.4" fill="none" stroke="#222" stroke-width="1"/></g><circle cx="604.4" cy="447.8" r="9.6" fill="#fff" fill-opacity="0.4"/><g transform="translate(604.4 447.8) scale(1.12)"><circle r="3.1" fill="#222"/><rect x="-1" y="-4.3" width="2" height="2" transform="rotate(0)" fill="#222"/><rect x="-1" y="-4.3" width="2" height="2" transform="rotate(60)" fill="#222"/><rect x="-1" y="-4.3" width="2" height="2" transform="rotate(120)" fill="#222"/><rect x="-1" y="-4.3" width="2" height="2" transform="rotate(180)" fill="#222"/><rect x="-1" y="-4.3" width="2" height="2" transform="rotate(240)" fill="#222"/><rect x="-1" y="-4.3" width="2" height="2" transform="rotate(300)" fill="#222"/><circle r="1.25" fill="#ececee"/></g></svg><div class="b" style="left:639px;top:57.2px;width:164px;height:16.4px;background:#fff;border-radius:3px;"></div><svg class="t" style="left:698.8px;top:60.02px;width:30.8px;height:9.36px;fill:#444;" role="img" aria-label="页面配置"><title>页面配置</title><text x="1" y="7.42" font-size="7.2">页面配置</text></svg><svg class="s" style="left:733px;top:60px;width:12px;height:11px;" viewBox="733 60 12 11"><rect x="735" y="61.2" width="7.6" height="5.2" rx="0.9" fill="none" stroke="#333" stroke-width="1"/><path d="M736.6 68.2 H741 L740.2 66.4 H737.4 Z" fill="#333"/></svg><svg class="t" style="left:640px;top:92.39px;width:16.2px;height:9.23px;fill:#333;" role="img" aria-label="宽度"><title>宽度</title><text x="1" y="7.31" font-size="7.1">宽度</text></svg><div class="b" style="left:661px;top:90.3px;width:55.4px;height:13.4px;background:#fff;border-radius:2px;"></div><span class="l" style="top:93.33px;font-size:7.3px;line-height:8.76px;color:#737377;left:666px;">1920</span><svg class="s" style="left:694px;top:92px;width:20px;height:10px;" viewBox="694 92 20 10"><path d="M695.8 97 H701.2 M705.4 97 H710.6 M708 94.4 V99.6" stroke="#555" stroke-width="0.8" fill="none"/></svg><svg class="t" style="left:727.4px;top:92.39px;width:16.2px;height:9.23px;fill:#333;" role="img" aria-label="高度"><title>高度</title><text x="1" y="7.31" font-size="7.1">高度</text></svg><div class="b" style="left:749px;top:90.3px;width:55.4px;height:13.4px;background:#fff;border-radius:2px;"></div><span class="l" style="top:93.33px;font-size:7.3px;line-height:8.76px;color:#737377;left:754px;">1080</span><svg class="s" style="left:782px;top:92px;width:20px;height:10px;" viewBox="782 92 20 10"><path d="M783.8 97 H789.2 M793.4 97 H798.6 M796 94.4 V99.6" stroke="#555" stroke-width="0.8" fill="none"/></svg><div class="b" style="left:638px;top:117.6px;width:165.6px;height:107.4px;background:#f8f8fa;border-radius:4px;"></div><svg class="s" style="left:640.6px;top:120.6px;width:160.4px;height:99.8px;border-radius:3px;overflow:hidden" viewBox="640.6 120.6 160.4 99.8"><defs><radialGradient id="pvg" gradientUnits="userSpaceOnUse" cx="721.92" cy="170.5" r="80.2"><stop offset="0" stop-color="#1f5573"/><stop offset="0.18" stop-color="#174560"/><stop offset="0.4" stop-color="#0e2e45"/><stop offset="0.7" stop-color="#081d31"/><stop offset="1" stop-color="#051424"/></radialGradient><clipPath id="pvc1"><rect x="679.9" y="120.6" width="26.47" height="99.8"/><rect x="735.24" y="120.6" width="26.47" height="99.8"/></clipPath><clipPath id="pvc2"><rect x="659.85" y="120.6" width="20.05" height="99.8"/><rect x="761.7" y="120.6" width="20.05" height="99.8"/></clipPath></defs><rect x="640.6" y="120.6" width="160.4" height="99.8" fill="url(#pvg)"/><path d="M716.5 160.3 L676.74 85.53M715.78 160.72 L670.73 89M715.09 161.19 L664.99 92.9M714.44 161.71 L659.55 97.21M713.82 162.27 L654.43 101.9M713.25 162.87 L649.66 106.94M712.72 163.52 L645.26 112.31M712.24 164.2 L641.27 117.99M711.82 164.91 L637.7 123.94M711.44 165.66 L634.56 130.13M711.12 166.42 L631.88 136.53M710.85 167.21 L629.66 143.11M710.64 168.02 L627.93 149.83M710.49 168.84 L626.68 156.66M710.4 169.67 L625.93 163.56M710.37 170.5 L625.68 170.5M710.4 171.33 L625.93 177.44M710.49 172.16 L626.68 184.34M710.64 172.98 L627.93 191.17M710.85 173.79 L629.66 197.89M711.12 174.58 L631.88 204.47M711.44 175.34 L634.56 210.87M711.82 176.09 L637.7 217.06M712.24 176.8 L641.27 223.01M712.72 177.48 L645.26 228.69M713.25 178.13 L649.66 234.06M713.82 178.73 L654.43 239.1M714.44 179.29 L659.55 243.79M715.09 179.81 L664.99 248.1M715.78 180.28 L670.73 252M716.5 180.7 L676.74 255.47M727.34 160.3 L767.1 85.53M728.07 160.72 L773.11 89M728.75 161.19 L778.85 92.9M729.41 161.71 L784.3 97.21M730.02 162.27 L789.42 101.9M730.59 162.87 L794.19 106.94M731.12 163.52 L798.58 112.31M731.6 164.2 L802.58 117.99M732.03 164.91 L806.15 123.94M732.41 165.66 L809.29 130.13M732.73 166.42 L811.97 136.53M732.99 167.21 L814.18 143.11M733.2 168.02 L815.92 149.83M733.35 168.84 L817.16 156.66M733.44 169.67 L817.91 163.56M733.47 170.5 L818.16 170.5M733.44 171.33 L817.91 177.44M733.35 172.16 L817.16 184.34M733.2 172.98 L815.92 191.17M732.99 173.79 L814.18 197.89M732.73 174.58 L811.97 204.47M732.41 175.34 L809.29 210.87M732.03 176.09 L806.15 217.06M731.6 176.8 L802.58 223.01M731.12 177.48 L798.58 228.69M730.59 178.13 L794.19 234.06M730.02 178.73 L789.42 239.1M729.41 179.29 L784.3 243.79M728.75 179.81 L778.85 248.1M728.07 180.28 L773.11 252M727.34 180.7 L767.1 255.47" clip-path="url(#pvc1)" stroke="#4f9fc4" stroke-opacity="0.4" stroke-width="0.95" stroke-dasharray="2.2 0.8" fill="none"/><path d="M693.91 163.52 L628.54 147.22M693.53 165.24 L627.29 152.96M693.27 166.98 L626.4 158.77M693.1 168.74 L625.86 164.62M693.05 170.5 L625.68 170.5M693.1 172.26 L625.86 176.38M693.27 174.02 L626.4 182.23M693.53 175.76 L627.29 188.04M693.91 177.48 L628.54 193.78M749.94 163.52 L815.3 147.22M750.31 165.24 L816.55 152.96M750.58 166.98 L817.45 158.77M750.74 168.74 L817.98 164.62M750.79 170.5 L818.16 170.5M750.74 172.26 L817.98 176.38M750.58 174.02 L817.45 182.23M750.31 175.76 L816.55 188.04M749.94 177.48 L815.3 193.78" clip-path="url(#pvc2)" stroke="#4a9cc0" stroke-opacity="0.2" stroke-width="0.9" stroke-dasharray="1.8 1" fill="none"/><defs><linearGradient id="pvv" x1="0" y1="0" x2="0" y2="1"><stop offset="0" stop-color="#04101d" stop-opacity="0.75"/><stop offset="0.28" stop-color="#04101d" stop-opacity="0"/><stop offset="0.78" stop-color="#04101d" stop-opacity="0"/><stop offset="1" stop-color="#04101d" stop-opacity="0.6"/></linearGradient></defs><rect x="640.6" y="120.6" width="160.4" height="99.8" fill="url(#pvv)"/></svg><svg class="t" style="left:637.3px;top:238.69px;width:30.4px;height:9.23px;fill:#333;" role="img" aria-label="背景选择"><title>背景选择</title><text x="1" y="7.31" font-size="7.1">背景选择</text></svg><div class="b" style="left:673px;top:237.6px;width:126.4px;height:14.6px;background:#fff;border-radius:2px;"></div><svg class="s" style="left:685.7px;top:238.2px;width:26.2px;height:13.4px;" viewBox="685.7 238.2 26.2 13.4"><defs><radialGradient id="tb"><stop offset="0" stop-color="#1a5878"/><stop offset="0.6" stop-color="#0b2a40"/><stop offset="1" stop-color="#061626"/></radialGradient></defs><rect x="685.7" y="238.2" width="26.2" height="13.4" fill="url(#tb)"/></svg><svg class="s" style="left:786px;top:241px;width:10px;height:8px;" viewBox="786 241 10 8"><path d="M788.6 243.8 L790.9 246 L793.2 243.8" fill="none" stroke="#c2c2c6" stroke-width="0.8"/></svg><svg class="t" style="left:637.3px;top:257.49px;width:30.4px;height:9.23px;fill:#333;" role="img" aria-label="背景颜色"><title>背景颜色</title><text x="1" y="7.31" font-size="7.1">背景颜色</text></svg><div class="b" style="left:673px;top:257.2px;width:126.4px;height:13.2px;background:#fff;border-radius:2px;background-image:linear-gradient(45deg,#dfdfe3 25%,transparent 25%,transparent 75%,#dfdfe3 75%),linear-gradient(45deg,#dfdfe3 25%,transparent 25%,transparent 75%,#dfdfe3 75%);background-size:5px 5px;background-position:0 0,2.5px 2.5px;"></div><svg class="t" style="left:637.3px;top:282.38px;width:30.4px;height:9.23px;fill:#333;" role="img" aria-label="应用类型"><title>应用类型</title><text x="1" y="7.31" font-size="7.1">应用类型</text></svg><div class="b" style="left:673px;top:281px;width:126.4px;height:14px;background:#fff;border-radius:2px;"></div><svg class="t" style="left:677.3px;top:283.69px;width:30.4px;height:9.23px;fill:#333;" role="img" aria-label="应用背景"><title>应用背景</title><text x="1" y="7.31" font-size="7.1">应用背景</text></svg><svg class="s" style="left:786px;top:284px;width:10px;height:8px;" viewBox="786 284 10 8"><path d="M788.6 287 L790.9 289.2 L793.2 287" fill="none" stroke="#c2c2c6" stroke-width="0.8"/></svg><svg class="t" style="left:637.3px;top:303.38px;width:30.4px;height:9.23px;fill:#333;" role="img" aria-label="背景控制"><title>背景控制</title><text x="1" y="7.31" font-size="7.1">背景控制</text></svg><div class="b" style="left:673px;top:302px;width:59.8px;height:13.5px;background:#f7f7f9;border-radius:2px;border:1px solid #e6e6ea;box-sizing:border-box;"></div><svg class="t" style="left:687.7px;top:304.38px;width:30.4px;height:9.23px;fill:#333;" role="img" aria-label="清除背景"><title>清除背景</title><text x="1" y="7.31" font-size="7.1">清除背景</text></svg><div class="b" style="left:739.4px;top:302px;width:60px;height:13.5px;background:#f5f5f7;border-radius:2px;border:1px solid #ebebee;box-sizing:border-box;"></div><svg class="t" style="left:754.2px;top:304.38px;width:30.4px;height:9.23px;fill:#c2c2c6;" role="img" aria-label="清除颜色"><title>清除颜色</title><text x="1" y="7.31" font-size="7.1">清除颜色</text></svg><svg class="t" style="left:637.3px;top:323.99px;width:30.4px;height:9.23px;fill:#333;" role="img" aria-label="适配方式"><title>适配方式</title><text x="1" y="7.31" font-size="7.1">适配方式</text></svg><div class="b" style="left:672.6px;top:322.4px;width:127.2px;height:14.3px;background:#f6f6f8;border-radius:2.5px;border:1px solid #e6e6ea;box-sizing:border-box;"></div><div class="b" style="left:704px;top:322.8px;width:0.8px;height:13.5px;background:#e6e6ea;"></div><div class="b" style="left:735.9px;top:322.8px;width:0.8px;height:13.5px;background:#e6e6ea;"></div><div class="b" style="left:767.6px;top:322.8px;width:0.8px;height:13.5px;background:#e6e6ea;"></div><div class="b" style="left:672.6px;top:322.4px;width:31.8px;height:14.3px;background:#f4fbf8;border-radius:2.5px;border:1px solid #7fd0b2;box-sizing:border-box;"></div><svg class="s" style="left:672px;top:322px;width:128px;height:15px;" viewBox="672 322 128 15"><g transform="translate(688.5 329.5)" fill="none" stroke="#7fd0b2" stroke-width="0.8"><path d="M-2.6 0.6 V-2.4 H2.6 V1.6 H0.6"/><circle cx="-1.4" cy="1.8" r="1.2"/></g><g transform="translate(720.35 329.5)" fill="none" stroke="#222" stroke-width="0.9"><rect x="-3.4" y="-3" width="6.8" height="6" rx="0.8"/><path d="M-2.2 0 H2.2 M-1.2 -1 L-2.2 0 L-1.2 1 M1.2 -1 L2.2 0 L1.2 1" stroke-width="0.7"/></g><g transform="translate(752.15 329.5)" fill="none" stroke="#222" stroke-width="0.9"><rect x="-3.2" y="-3.2" width="6.4" height="6.4" rx="0.8"/><path d="M0 -2.2 V2.2 M-1 -1.2 L0 -2.2 L1 -1.2 M-1 1.2 L0 2.2 L1 1.2" stroke-width="0.7"/></g><g transform="translate(783.9 329.5)"><rect x="-3.2" y="-3.2" width="6.4" height="6.4" rx="0.8" fill="none" stroke="#222" stroke-width="0.9"/><path d="M-1.6 -3 H3 V1.6 Z" fill="#222"/><path d="M-3 -1 V3 H1 Z" fill="#222" opacity="0.0"/></g></svg><svg class="t" style="left:637.3px;top:350.69px;width:16.2px;height:9.23px;fill:#333;" role="img" aria-label="滤镜"><title>滤镜</title><text x="1" y="7.31" font-size="7.1">滤镜</text></svg><svg class="s" style="left:654px;top:351px;width:8px;height:9px;" viewBox="654 351 8 9"><path d="M656.8 352.8 L659.4 355.4 L656.8 358" fill="none" stroke="#444" stroke-width="0.8"/></svg><div class="b" style="left:788.2px;top:351.4px;width:16.2px;height:8.4px;background:#d9d9dd;border-radius:4.2px;"></div><div class="b" style="left:789px;top:352.1px;width:7px;height:7px;background:#fff;border-radius:3.5px;box-shadow:0 0.3px 1px rgba(0,0,0,0.2);"></div><div class="b" style="left:639px;top:377.8px;width:164px;height:16.8px;background:#fff;border-radius:3px;"></div><svg class="t" style="left:698.8px;top:381.19px;width:30.4px;height:9.23px;fill:#444;" role="img" aria-label="主题颜色"><title>主题颜色</title><text x="1" y="7.31" font-size="7.1">主题颜色</text></svg><svg class="s" style="left:733px;top:381px;width:11px;height:11px;" viewBox="733 381 11 11"><circle cx="738.3" cy="386.2" r="3.3" fill="#222"/><circle cx="736.8" cy="385" r="0.7" fill="#fff"/><circle cx="738.8" cy="384.4" r="0.6" fill="#fff"/><circle cx="740.2" cy="386" r="0.6" fill="#fff"/><path d="M738.6 387.4 a1.2 1.2 0 0 0 2.6 0.6 l0.4 1.6 h-2.6z" fill="#fff"/></svg><div class="b" style="left:638px;top:404.2px;width:166.4px;height:21.8px;background:#e8e8eb;border-radius:4px;"></div><svg class="t" style="left:645.8px;top:409.38px;width:37.5px;height:9.23px;fill:#444;" role="img" aria-label="自定义颜色"><title>自定义颜色</title><text x="1" y="7.31" font-size="7.1">自定义颜色</text></svg><svg class="s" style="left:787px;top:410px;width:10px;height:10px;" viewBox="787 410 10 10"><path d="M789.6 414.2 H794.8 M792.2 411.6 V416.8" stroke="#666" stroke-width="0.8"/></svg><div class="b" style="left:638px;top:434.4px;width:166.8px;height:22.8px;background:#ececef;border-radius:4px;border:1px solid #6fcbaa;box-sizing:border-box;overflow:hidden;"><div class="b" style="left:0;right:0;bottom:0;height:1.6px;background:linear-gradient(90deg,#4c86f5,#5cd5f7 50%,#1fba86);"></div></div><svg class="t" style="left:646.4px;top:441.05px;width:16px;height:9.1px;fill:#333;" role="img" aria-label="明亮"><title>明亮</title><text x="1" y="7.21" font-size="7">明亮</text></svg><div class="b" style="left:687.3px;top:440.5px;width:10px;height:10px;background:#4c86f5;border-radius:2.6px;"></div><div class="b" style="left:706.8px;top:440.5px;width:10px;height:10px;background:#7df7ab;border-radius:2.6px;"></div><div class="b" style="left:726.4px;top:440.5px;width:10px;height:10px;background:#fcd84f;border-radius:2.6px;"></div><div class="b" style="left:746.1px;top:440.5px;width:10px;height:10px;background:#f5606a;border-radius:2.6px;"></div><div class="b" style="left:765.8px;top:440.5px;width:10px;height:10px;background:#5cd5f7;border-radius:2.6px;"></div><div class="b" style="left:785.4px;top:440.5px;width:10px;height:10px;background:#1fba86;border-radius:2.6px;"></div><div class="b" style="left:638px;top:466.2px;width:166.8px;height:21.8px;background:#e8e8eb;border-radius:4px;overflow:hidden;"><div class="b" style="left:0;right:0;bottom:0;height:1.8px;background:linear-gradient(90deg,#4a5fc0,#6cbbd8 50%,#2f9d6b);"></div></div><svg class="t" style="left:646.4px;top:471.85px;width:16px;height:9.1px;fill:#333;" role="img" aria-label="暗淡"><title>暗淡</title><text x="1" y="7.21" font-size="7">暗淡</text></svg><div class="b" style="left:687.3px;top:471px;width:10px;height:10px;background:#4a5fc0;border-radius:2.6px;"></div><div class="b" style="left:706.8px;top:471px;width:10px;height:10px;background:#86c86a;border-radius:2.6px;"></div><div class="b" style="left:726.4px;top:471px;width:10px;height:10px;background:#f6bf4d;border-radius:2.6px;"></div><div class="b" style="left:746.1px;top:471px;width:10px;height:10px;background:#e8555a;border-radius:2.6px;"></div><div class="b" style="left:765.8px;top:471px;width:10px;height:10px;background:#6cbbd8;border-radius:2.6px;"></div><div class="b" style="left:785.4px;top:471px;width:10px;height:10px;background:#2f9d6b;border-radius:2.6px;"></div></div></div><svg class="s" style="left:0;top:0;width:828px;height:518px" viewBox="0 0 828 518"><rect x="19.75" y="19.75" width="788.5" height="478.6" rx="9.4" fill="none" stroke="#5b5bf6" stroke-width="1.5"/></svg><div id="soft"></div></body></html>
